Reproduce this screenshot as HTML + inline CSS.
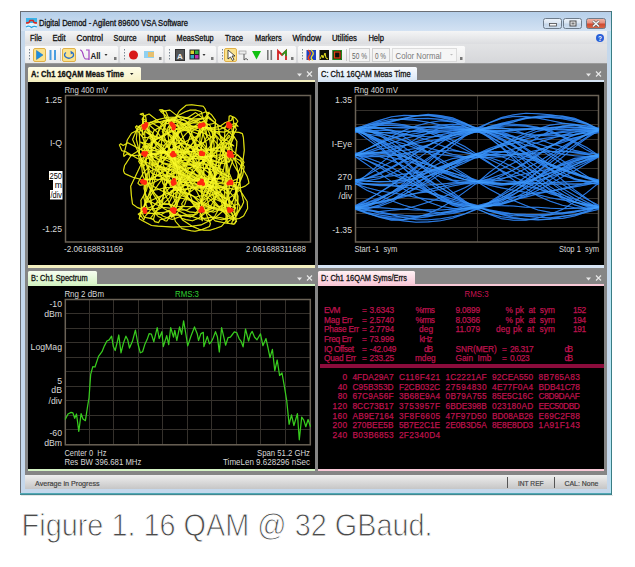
<!DOCTYPE html>
<html><head><meta charset="utf-8"><style>
html,body{margin:0;padding:0;background:#fff;width:635px;height:567px;overflow:hidden}
svg{display:block}
</style></head><body>
<svg width="635" height="567" viewBox="0 0 635 567" shape-rendering="auto">
<defs>
<linearGradient id="gTitle" x1="0" y1="0" x2="0" y2="1"><stop offset="0" stop-color="#b6cfe9"/><stop offset="1" stop-color="#d3e2f3"/></linearGradient>
<linearGradient id="gMenu" x1="0" y1="0" x2="0" y2="1"><stop offset="0" stop-color="#f4f5f6"/><stop offset="1" stop-color="#dcdde0"/></linearGradient>
<linearGradient id="gTool" x1="0" y1="0" x2="0" y2="1"><stop offset="0" stop-color="#e2e3e5"/><stop offset="1" stop-color="#d6d7da"/></linearGradient>
<linearGradient id="gStrip" x1="0" y1="0" x2="0" y2="1"><stop offset="0" stop-color="#fbfbfb"/><stop offset="1" stop-color="#ebebeb"/></linearGradient>
<linearGradient id="gStatus" x1="0" y1="0" x2="0" y2="1"><stop offset="0" stop-color="#eeeeee"/><stop offset="1" stop-color="#c6c6c6"/></linearGradient>
<linearGradient id="gTeal" x1="0" y1="0" x2="0" y2="1"><stop offset="0" stop-color="#58b8c8"/><stop offset="1" stop-color="#3a787e"/></linearGradient>
<linearGradient id="gBtn" x1="0" y1="0" x2="0" y2="1"><stop offset="0" stop-color="#edf3fa"/><stop offset="0.45" stop-color="#dbe6f2"/><stop offset="0.55" stop-color="#c4d6ea"/><stop offset="1" stop-color="#d0e0f0"/></linearGradient>
<linearGradient id="gClose" x1="0" y1="0" x2="0" y2="1"><stop offset="0" stop-color="#f2b8a8"/><stop offset="0.45" stop-color="#e49080"/><stop offset="0.55" stop-color="#d04a30"/><stop offset="1" stop-color="#d86a48"/></linearGradient>
<linearGradient id="gTabA" x1="0" y1="0" x2="0" y2="1"><stop offset="0" stop-color="#fffde8"/><stop offset="1" stop-color="#f6f0c4"/></linearGradient>
<linearGradient id="gTabC" x1="0" y1="0" x2="0" y2="1"><stop offset="0" stop-color="#fafcff"/><stop offset="1" stop-color="#d8e6f6"/></linearGradient>
<linearGradient id="gTabB" x1="0" y1="0" x2="0" y2="1"><stop offset="0" stop-color="#f6fdf0"/><stop offset="1" stop-color="#d2f2c0"/></linearGradient>
<linearGradient id="gTabD" x1="0" y1="0" x2="0" y2="1"><stop offset="0" stop-color="#fff2f5"/><stop offset="1" stop-color="#f8c4d4"/></linearGradient>
<clipPath id="clipEye"><rect x="355" y="96" width="245" height="146"/></clipPath>
</defs>
<rect x="20" y="11" width="592" height="483" fill="#c5d8ec" />
<rect x="20.5" y="11.5" width="591" height="482" fill="none" stroke="#6a6e74" stroke-width="1"/>
<rect x="20" y="493" width="592" height="2" fill="url(#gTeal)" />
<rect x="21" y="495" width="592" height="1" fill="#e4e6e6" />
<rect x="611" y="11" width="1" height="484" fill="#3a7c84" />
<rect x="610" y="31" width="1" height="462" fill="#b4e6f4" />
<rect x="21" y="12" width="590" height="19" fill="url(#gTitle)" />
<rect x="25" y="31" width="582" height="13" fill="url(#gMenu)" />
<rect x="25" y="44" width="582" height="19" fill="url(#gTool)" />
<rect x="25" y="63" width="582" height="412" fill="#858585" />
<rect x="25" y="63" width="582" height="1" fill="#9a9a9a" />
<rect x="25" y="475" width="582" height="14" fill="url(#gStatus)" />
<g transform="translate(26,18)"><rect x="0" y="0" width="11" height="10.5" fill="#dff4fc"/><rect x="0" y="0" width="11" height="5" fill="#38b4ea"/><path d="M0 5 Q2 5 3 4.5 L4 2.5 L7 2.5 L8 4.5 Q9 5 11 5" stroke="#d82820" stroke-width="1.5" fill="none"/><path d="M0 9 Q3 7 5.5 9.5 Q8 7.5 11 9" stroke="#2aa0e0" stroke-width="1.3" fill="none"/></g>
<text xml:space="preserve" x="39.0" y="26.0" font-family="Liberation Sans" font-size="8.7" fill="#111" font-weight="normal" text-anchor="start" textLength="149.0" lengthAdjust="spacingAndGlyphs" stroke="#111" stroke-width="0.3">Digital Demod - Agilent 89600 VSA Software</text>
<rect x="543.5" y="18.5" width="18" height="10" rx="2" fill="url(#gBtn)" stroke="#6d7b8a" stroke-width="1"/>
<rect x="549.5" y="23.5" width="7" height="2.5" fill="#f8f8f8" stroke="#4a4a4a" stroke-width="0.8"/>
<rect x="563.5" y="18.5" width="18" height="10" rx="2" fill="url(#gBtn)" stroke="#6d7b8a" stroke-width="1"/>
<rect x="570" y="21" width="6" height="5" fill="#f0f0f0" stroke="#4a4a4a" stroke-width="1"/><rect x="571.5" y="22.5" width="3" height="2" fill="#777"/>
<rect x="586.5" y="18.5" width="19" height="10" rx="2" fill="url(#gClose)" stroke="#6d7b8a" stroke-width="1"/>
<path d="M593 21 L599 26.5 M599 21 L593 26.5" stroke="#555" stroke-width="2.6"/><path d="M593 21 L599 26.5 M599 21 L593 26.5" stroke="#f6f6f6" stroke-width="1.6"/>
<text xml:space="preserve" x="30.0" y="41.0" font-family="Liberation Sans" font-size="8.7" fill="#111" font-weight="normal" text-anchor="start" textLength="12.0" lengthAdjust="spacingAndGlyphs" stroke="#111" stroke-width="0.3">File</text>
<text xml:space="preserve" x="52.4" y="41.0" font-family="Liberation Sans" font-size="8.7" fill="#111" font-weight="normal" text-anchor="start" textLength="13.2" lengthAdjust="spacingAndGlyphs" stroke="#111" stroke-width="0.3">Edit</text>
<text xml:space="preserve" x="76.6" y="41.0" font-family="Liberation Sans" font-size="8.7" fill="#111" font-weight="normal" text-anchor="start" textLength="26.4" lengthAdjust="spacingAndGlyphs" stroke="#111" stroke-width="0.3">Control</text>
<text xml:space="preserve" x="113.6" y="41.0" font-family="Liberation Sans" font-size="8.7" fill="#111" font-weight="normal" text-anchor="start" textLength="23.0" lengthAdjust="spacingAndGlyphs" stroke="#111" stroke-width="0.3">Source</text>
<text xml:space="preserve" x="147.0" y="41.0" font-family="Liberation Sans" font-size="8.7" fill="#111" font-weight="normal" text-anchor="start" textLength="18.6" lengthAdjust="spacingAndGlyphs" stroke="#111" stroke-width="0.3">Input</text>
<text xml:space="preserve" x="176.6" y="41.0" font-family="Liberation Sans" font-size="8.7" fill="#111" font-weight="normal" text-anchor="start" textLength="37.0" lengthAdjust="spacingAndGlyphs" stroke="#111" stroke-width="0.3">MeasSetup</text>
<text xml:space="preserve" x="225.0" y="41.0" font-family="Liberation Sans" font-size="8.7" fill="#111" font-weight="normal" text-anchor="start" textLength="18.0" lengthAdjust="spacingAndGlyphs" stroke="#111" stroke-width="0.3">Trace</text>
<text xml:space="preserve" x="255.0" y="41.0" font-family="Liberation Sans" font-size="8.7" fill="#111" font-weight="normal" text-anchor="start" textLength="26.6" lengthAdjust="spacingAndGlyphs" stroke="#111" stroke-width="0.3">Markers</text>
<text xml:space="preserve" x="292.4" y="41.0" font-family="Liberation Sans" font-size="8.7" fill="#111" font-weight="normal" text-anchor="start" textLength="28.6" lengthAdjust="spacingAndGlyphs" stroke="#111" stroke-width="0.3">Window</text>
<text xml:space="preserve" x="332.0" y="41.0" font-family="Liberation Sans" font-size="8.7" fill="#111" font-weight="normal" text-anchor="start" textLength="25.0" lengthAdjust="spacingAndGlyphs" stroke="#111" stroke-width="0.3">Utilities</text>
<text xml:space="preserve" x="368.4" y="41.0" font-family="Liberation Sans" font-size="8.7" fill="#111" font-weight="normal" text-anchor="start" textLength="15.6" lengthAdjust="spacingAndGlyphs" stroke="#111" stroke-width="0.3">Help</text>
<circle cx="600" cy="38" r="4" fill="#2a5fd8"/><text x="600" y="40.5" font-family="Liberation Sans" font-size="6.5" font-weight="bold" fill="#fff" text-anchor="middle">?</text>
<rect x="25" y="46" width="93" height="17" rx="1.5" fill="url(#gStrip)"/>
<rect x="29" y="49" width="1" height="1.5" fill="#7a8794" />
<rect x="29" y="52" width="1" height="1.5" fill="#7a8794" />
<rect x="29" y="55" width="1" height="1.5" fill="#7a8794" />
<rect x="29" y="58" width="1" height="1.5" fill="#7a8794" />
<rect x="120" y="46" width="43" height="17" rx="1.5" fill="url(#gStrip)"/>
<rect x="124" y="49" width="1" height="1.5" fill="#7a8794" />
<rect x="124" y="52" width="1" height="1.5" fill="#7a8794" />
<rect x="124" y="55" width="1" height="1.5" fill="#7a8794" />
<rect x="124" y="58" width="1" height="1.5" fill="#7a8794" />
<rect x="165" y="46" width="51" height="17" rx="1.5" fill="url(#gStrip)"/>
<rect x="169" y="49" width="1" height="1.5" fill="#7a8794" />
<rect x="169" y="52" width="1" height="1.5" fill="#7a8794" />
<rect x="169" y="55" width="1" height="1.5" fill="#7a8794" />
<rect x="169" y="58" width="1" height="1.5" fill="#7a8794" />
<rect x="218" y="46" width="78" height="17" rx="1.5" fill="url(#gStrip)"/>
<rect x="222" y="49" width="1" height="1.5" fill="#7a8794" />
<rect x="222" y="52" width="1" height="1.5" fill="#7a8794" />
<rect x="222" y="55" width="1" height="1.5" fill="#7a8794" />
<rect x="222" y="58" width="1" height="1.5" fill="#7a8794" />
<rect x="298" y="46" width="167" height="17" rx="1.5" fill="url(#gStrip)"/>
<rect x="302" y="49" width="1" height="1.5" fill="#7a8794" />
<rect x="302" y="52" width="1" height="1.5" fill="#7a8794" />
<rect x="302" y="55" width="1" height="1.5" fill="#7a8794" />
<rect x="302" y="58" width="1" height="1.5" fill="#7a8794" />
<rect x="33.5" y="48.5" width="12" height="13" rx="1.5" fill="#fbe38e" stroke="#e0b048" stroke-width="1"/>
<rect x="62.5" y="48.5" width="13" height="13" rx="1.5" fill="#fbe38e" stroke="#e0b048" stroke-width="1"/>
<rect x="224.5" y="48.5" width="12" height="13" rx="1.5" fill="#fbe38e" stroke="#e0b048" stroke-width="1"/>
<path d="M36.5 50.5 L43 55 L36.5 59.5 Z" fill="#1c8ee0" stroke="#1a6fb8" stroke-width="0.5"/>
<rect x="49.5" y="50" width="2" height="10" fill="#4a9ee0"/><rect x="54" y="50" width="2" height="10" fill="#4a9ee0"/>
<rect x="60" y="48" width="1" height="13" fill="#c8c8c8" />
<path d="M66 52.5 A4.5 3.2 0 1 0 72.5 52.8" fill="none" stroke="#2a70c8" stroke-width="1.4"/><path d="M70.5 50.8 L73.5 52.5 L70.8 54.5 Z" fill="#2a70c8"/>
<path d="M80 50 Q82 50 83 54 Q84 59 86 59 L89 59 M86 50 L89 50 L89 60" stroke="#a040c0" stroke-width="1.2" fill="none"/>
<text xml:space="preserve" x="90.4" y="58.5" font-family="Liberation Sans" font-size="8.5" fill="#222" font-weight="bold" text-anchor="start" textLength="10.2" lengthAdjust="spacingAndGlyphs" >All</text>
<path d="M104.5 54 L107.5 54 L106 56 Z" fill="#333"/>
<rect x="114" y="57" width="2.5" height="3" fill="#777" />
<circle cx="133.5" cy="55" r="4.5" fill="#d81818"/>
<rect x="144" y="51" width="10" height="7" fill="#8fd0f0"/><rect x="148" y="52" width="6" height="5" fill="#e6c070"/>
<rect x="159" y="57" width="2.5" height="3" fill="#777" />
<rect x="175.5" y="49.5" width="9" height="11" fill="#555" stroke="#333"/><text x="180" y="58.5" font-family="Liberation Sans" font-size="8" font-weight="bold" fill="#eee" text-anchor="middle">A</text>
<rect x="189.5" y="49.5" width="10" height="10" fill="#222"/><rect x="190.5" y="50.5" width="3.5" height="3.5" fill="#d8d030"/><rect x="195" y="50.5" width="3.5" height="3.5" fill="#30b040"/><rect x="190.5" y="55" width="3.5" height="3.5" fill="#30a8c0"/><rect x="195" y="55" width="3.5" height="3.5" fill="#c030b0"/>
<path d="M202.5 54 L205.5 54 L204 56 Z" fill="#333"/>
<rect x="211" y="57" width="2.5" height="3" fill="#777" />
<path d="M228 50 L228 59 L230.5 57 L232.5 60.5 L234 59.5 L232 56 L235 56 Z" fill="#fff" stroke="#222" stroke-width="0.8"/>
<rect x="239" y="51" width="7" height="3" fill="#eee" stroke="#888" stroke-width="0.6"/><path d="M244 54 L244 60 L246 58.5 L248 60" stroke="#444" stroke-width="0.9" fill="none"/>
<path d="M252 51 L261 51 L256.5 59.5 Z" fill="#10c010"/>
<rect x="267" y="50" width="1.6" height="10" fill="#777" />
<rect x="270.5" y="50" width="1.6" height="10" fill="#777" />
<path d="M278 60 L278 51 L282 55 L286 51 L286 60" stroke="#d02020" stroke-width="1.8" fill="none"/><path d="M282 55 L286 51 L286 56" stroke="#20a020" stroke-width="1.6" fill="none"/>
<rect x="291" y="57" width="2.5" height="3" fill="#777" />
<rect x="306.5" y="50" width="9.5" height="10" fill="#2040c0"/><path d="M308 50 Q312 53 309 56 Q307 59 310 60" stroke="#f04010" stroke-width="1.5" fill="none"/><path d="M311 50 Q315 53 312 56 Q310 59 313 60" stroke="#f0e020" stroke-width="1.3" fill="none"/>
<rect x="319.5" y="50" width="9.5" height="10" fill="#101008"/><path d="M320 59 L322 55 L323 58 L325 53 L326 58 L328 59" stroke="#e8e020" stroke-width="1" fill="none"/>
<rect x="332.5" y="50" width="9.5" height="10" fill="#101008"/><rect x="334.5" y="52" width="5.5" height="6" fill="none" stroke="#e04010" stroke-width="1.2"/><rect x="333" y="50.5" width="8.5" height="9" fill="none" stroke="#20a020" stroke-width="0.8"/>
<rect x="346" y="49" width="1" height="12" fill="#c8c8c8" />
<rect x="349.5" y="48.5" width="20" height="13" fill="#f4f4f4" stroke="#d0d0d0"/>
<text xml:space="preserve" x="352.0" y="58.5" font-family="Liberation Sans" font-size="8.7" fill="#666" font-weight="normal" text-anchor="start" textLength="15.0" lengthAdjust="spacingAndGlyphs" >50 %</text>
<rect x="372.5" y="48.5" width="17" height="13" fill="#f4f4f4" stroke="#d0d0d0"/>
<text xml:space="preserve" x="375.0" y="58.5" font-family="Liberation Sans" font-size="8.7" fill="#666" font-weight="normal" text-anchor="start" textLength="11.0" lengthAdjust="spacingAndGlyphs" >0 %</text>
<rect x="392.5" y="48.5" width="64" height="13" fill="#f6f6f6" stroke="#dcdcdc"/>
<text xml:space="preserve" x="395.5" y="58.5" font-family="Liberation Sans" font-size="8.7" fill="#7a7a7a" font-weight="normal" text-anchor="start" textLength="46.0" lengthAdjust="spacingAndGlyphs" >Color Normal</text>
<path d="M450 54 L453 54 L451.5 55.5 Z" fill="#bbb"/>
<rect x="460" y="57" width="2.5" height="3" fill="#777" />
<rect x="28" y="67" width="113" height="15" rx="1.5" fill="url(#gTabA)"/>
<rect x="28" y="80" width="287" height="2" fill="#f3efc0" />
<rect x="28" y="82" width="287" height="183" fill="#000" />
<rect x="28" y="265" width="287" height="3" fill="#f3efc0" />
<text xml:space="preserve" x="31.0" y="77.0" font-family="Liberation Sans" font-size="8.7" fill="#111" font-weight="bold" text-anchor="start" textLength="93.0" lengthAdjust="spacingAndGlyphs" stroke="#111" stroke-width="0.3">A: Ch1 16QAM Meas Time</text>
<path d="131 73" />
<path d="M130 73 L133.5 73 L131.7 75 Z" fill="#222"/>
<path d="M297 73.5 L302 73.5 L299.5 76.5 Z" fill="#e8e8e8"/>
<path d="M307 71.5 L312 76.5 M312 71.5 L307 76.5" stroke="#e8e8e8" stroke-width="1.2"/>
<rect x="318" y="67" width="99" height="15" rx="1.5" fill="url(#gTabC)"/>
<rect x="318" y="80" width="286" height="2" fill="#d6e4f4" />
<rect x="318" y="82" width="286" height="183" fill="#000" />
<rect x="318" y="265" width="286" height="3" fill="#d6e4f4" />
<text xml:space="preserve" x="321.0" y="77.0" font-family="Liberation Sans" font-size="8.7" fill="#111" font-weight="normal" text-anchor="start" textLength="89.6" lengthAdjust="spacingAndGlyphs" stroke="#111" stroke-width="0.3">C: Ch1 16QAM Meas Time</text>
<path d="M586 73.5 L591 73.5 L588.5 76.5 Z" fill="#e8e8e8"/>
<path d="M596 71.5 L601 76.5 M601 71.5 L596 76.5" stroke="#e8e8e8" stroke-width="1.2"/>
<rect x="28" y="271" width="69" height="15" rx="1.5" fill="url(#gTabB)"/>
<rect x="28" y="284" width="287" height="2" fill="#d4f2c4" />
<rect x="28" y="286" width="287" height="183" fill="#000" />
<rect x="28" y="469" width="287" height="2" fill="#d4f2c4" />
<text xml:space="preserve" x="31.0" y="281.0" font-family="Liberation Sans" font-size="8.7" fill="#111" font-weight="normal" text-anchor="start" textLength="56.6" lengthAdjust="spacingAndGlyphs" stroke="#111" stroke-width="0.3">B: Ch1 Spectrum</text>
<path d="M297 277.5 L302 277.5 L299.5 280.5 Z" fill="#e8e8e8"/>
<path d="M307 275.5 L312 280.5 M312 275.5 L307 280.5" stroke="#e8e8e8" stroke-width="1.2"/>
<rect x="318" y="271" width="97" height="15" rx="1.5" fill="url(#gTabD)"/>
<rect x="318" y="284" width="286" height="2" fill="#f8c8d6" />
<rect x="318" y="286" width="286" height="183" fill="#000" />
<rect x="318" y="469" width="286" height="2" fill="#f8c8d6" />
<text xml:space="preserve" x="321.0" y="281.0" font-family="Liberation Sans" font-size="8.7" fill="#111" font-weight="normal" text-anchor="start" textLength="86.0" lengthAdjust="spacingAndGlyphs" stroke="#111" stroke-width="0.3">D: Ch1 16QAM Syms/Errs</text>
<path d="M586 277.5 L591 277.5 L588.5 280.5 Z" fill="#e8e8e8"/>
<path d="M596 275.5 L601 280.5 M601 275.5 L596 280.5" stroke="#e8e8e8" stroke-width="1.2"/>
<rect x="65.5" y="95.5" width="245" height="146.5" fill="none" stroke="#6a6256" stroke-width="1.5"/>
<text xml:space="preserve" x="64.4" y="93.0" font-family="Liberation Sans" font-size="8.7" fill="#d8d8d8" font-weight="normal" text-anchor="start" textLength="43.6" lengthAdjust="spacingAndGlyphs" >Rng 400 mV</text>
<text xml:space="preserve" x="62.0" y="103.0" font-family="Liberation Sans" font-size="8.7" fill="#d8d8d8" font-weight="normal" text-anchor="end" >1.25</text>
<text xml:space="preserve" x="62.0" y="146.0" font-family="Liberation Sans" font-size="8.7" fill="#d8d8d8" font-weight="normal" text-anchor="end" >I-Q</text>
<rect x="49" y="171" width="13.5" height="9" fill="#fff" />
<rect x="53" y="180" width="9.5" height="10" fill="#fff" />
<rect x="50" y="190" width="12.5" height="9.5" fill="#fff" />
<text xml:space="preserve" x="62.0" y="178.5" font-family="Liberation Sans" font-size="8.7" fill="#000" font-weight="normal" text-anchor="end" textLength="12.5" lengthAdjust="spacingAndGlyphs" >250</text>
<text xml:space="preserve" x="62.0" y="188.0" font-family="Liberation Sans" font-size="8.7" fill="#000" font-weight="normal" text-anchor="end" >m</text>
<text xml:space="preserve" x="62.0" y="197.5" font-family="Liberation Sans" font-size="8.7" fill="#000" font-weight="normal" text-anchor="end" textLength="11.5" lengthAdjust="spacingAndGlyphs" >/div</text>
<text xml:space="preserve" x="62.0" y="232.0" font-family="Liberation Sans" font-size="8.7" fill="#d8d8d8" font-weight="normal" text-anchor="end" >-1.25</text>
<text xml:space="preserve" x="64.0" y="252.0" font-family="Liberation Sans" font-size="8.7" fill="#d8d8d8" font-weight="normal" text-anchor="start" textLength="59.0" lengthAdjust="spacingAndGlyphs" >-2.06168831169</text>
<text xml:space="preserve" x="306.0" y="252.0" font-family="Liberation Sans" font-size="8.7" fill="#d8d8d8" font-weight="normal" text-anchor="end" textLength="60.0" lengthAdjust="spacingAndGlyphs" >2.061688311688</text>
<g fill="none" stroke-linejoin="round"><polyline points="171.3,182.0 169.8,185.1 175.7,187.4 180.1,190.1 185.0,189.7 192.7,188.2 198.8,185.9 205.7,183.3 214.3,180.3 214.2,169.7 211.4,161.6 210.4,158.7 210.8,148.6 209.9,140.4 205.5,133.9 204.7,130.4 199.7,124.3 201.1,125.3 199.7,125.7 199.3,123.2 200.4,132.7 199.8,140.2 200.5,145.0 194.5,148.3 193.6,153.7 192.7,157.8 193.3,161.9 193.4,167.3 194.1,166.1 193.3,166.4 196.7,171.3 201.4,175.8 201.4,178.4 204.8,181.3 210.5,185.5 213.9,189.9 214.6,194.1 222.6,201.8 226.7,205.5 230.3,207.7 232.7,209.9 230.1,213.1 227.8,211.3 222.1,209.5 214.4,208.1 201.4,201.2 189.4,193.7 177.0,190.2 169.3,183.6 161.8,177.4 151.7,173.2 148.0,167.0 144.5,160.2 146.8,159.0 145.5,159.6 147.3,154.0 151.8,154.8 158.8,151.8 167.1,151.9 170.9,150.5 178.9,152.0 184.4,152.7 195.2,151.1 204.3,155.0 207.4,159.9 211.2,164.9 213.7,171.3 216.1,181.7 217.2,191.3 216.0,196.5 211.7,204.7 206.2,212.4 199.0,218.0 192.5,220.8 185.9,219.6 181.4,218.2 180.4,215.1 175.0,215.0 171.7,217.3 172.6,215.0 177.6,213.2 182.5,219.9 191.8,226.1 199.2,229.3 204.0,230.3 210.0,230.2 216.2,228.2 221.7,226.2 226.0,221.1 226.2,208.4 220.0,190.3 211.7,173.2 199.8,156.0 192.2,139.6 187.7,127.7 177.2,121.0 172.4,119.2 166.4,121.2 162.3,131.5 167.4,144.7 174.3,159.1 180.2,178.6 184.6,192.3 191.5,202.0 197.7,210.2 206.6,212.9 213.8,210.2 214.1,202.8 216.1,195.4 215.3,179.4 213.2,166.1 210.3,154.8 201.3,144.6 192.7,135.7 185.5,129.5 182.0,126.5 177.0,120.2 168.5,118.7 166.8,120.8 165.4,123.0 170.1,124.0 176.4,125.9 185.5,123.4 192.5,126.6 199.4,126.9 211.9,128.9 220.0,129.3 227.4,126.1 232.5,124.3 235.3,123.3 238.0,126.3 235.5,124.1 236.1,124.2 235.8,127.0 230.4,125.7 230.5,128.0 227.9,130.8 224.1,132.1 215.1,131.2 215.0,134.2 204.5,142.2 198.2,144.6 190.1,147.6 179.2,151.9 170.3,153.8 165.3,158.1 161.7,162.2 152.1,160.0 152.6,156.5 147.1,154.2 147.4,154.8 146.2,152.7 147.7,155.8 148.4,156.6 150.1,161.7 156.5,168.6 161.9,177.3 172.6,184.4 181.1,192.7 192.5,202.6 204.7,210.3 215.1,220.9 225.2,223.0 230.6,223.7 233.7,224.1 234.6,224.0 236.3,221.3 235.9,217.6 233.7,211.7 221.3,197.1 210.9,182.9 197.9,169.3 188.4,152.6 178.5,140.8 167.0,132.4 158.3,126.7 150.3,122.1 149.8,123.6 146.8,128.4 152.5,132.8 157.0,144.1 165.3,152.3 176.5,165.1 190.5,174.0 204.3,182.7 212.0,190.0 222.5,195.9 224.2,198.4 226.0,197.9 224.9,198.3 222.6,194.4 213.6,187.8 202.8,185.4 193.8,179.3 182.4,176.0 174.5,167.6 163.2,163.4 155.4,157.7 148.0,154.3 143.6,155.4 141.5,148.9 142.6,150.9 148.4,146.7 152.9,150.5 163.3,151.4 171.4,157.4 181.3,163.9 190.9,168.9 199.8,179.7 201.0,183.5 201.8,197.2 201.8,208.7 196.6,214.0 190.4,216.9 183.5,215.7 173.8,214.4 162.6,207.7 157.6,201.1 149.3,187.4 145.9,175.5 141.9,164.0 139.2,150.8 136.3,139.2 137.2,130.1 138.4,127.5 142.1,124.2 145.6,125.7 145.2,127.2 150.2,134.3 155.4,143.5 161.6,146.6 166.1,153.5 170.1,152.5 175.6,150.2 185.4,151.4 191.8,151.7 196.6,148.7 200.9,141.3 202.8,143.6 205.5,146.5 206.6,152.7 202.1,162.3 189.4,168.2 184.1,174.4 175.1,185.5 169.4,197.9 159.4,207.7 151.5,209.2 144.6,209.6 142.2,209.2 145.3,203.9 143.7,196.6 147.4,181.2 148.3,168.4 152.1,150.4 160.7,139.3 172.4,129.4 181.6,119.9 188.7,117.1 195.6,112.6 203.0,118.3 205.4,122.2 207.5,125.2 206.0,128.9 202.4,130.5 198.7,134.2 190.8,131.1 185.4,130.6 174.4,124.8 167.8,119.3 162.6,123.2 156.1,121.5 148.5,122.7 139.3,125.9 136.5,130.3 132.6,139.5 137.5,150.4 142.6,161.2 148.8,166.5 155.2,170.1 165.7,175.7 180.1,178.8 192.8,180.9 208.5,178.9 214.6,179.2 220.2,178.1 224.1,176.8 227.2,182.1 225.9,187.0 221.9,189.4 216.8,196.2 207.5,202.3 203.0,206.7 197.7,209.5 199.4,211.2 198.4,208.8 199.7,202.3 204.3,198.1 209.9,188.6 217.1,180.4 223.4,169.9 225.8,158.5 226.5,152.8 225.8,153.1 223.6,157.7 218.4,160.4 212.8,170.4 202.5,183.0 188.6,193.0 184.7,204.6 175.2,214.9 169.3,216.2 171.2,213.4 175.9,206.6 180.3,197.2 193.4,180.1 207.2,166.3 213.2,155.6 223.4,142.2 230.1,136.6 228.8,135.1 224.1,142.0 217.6,146.3 205.6,157.2 195.9,169.4 180.6,182.9 166.1,196.7 153.1,206.1 143.7,209.9 137.1,207.4 132.5,204.0 131.4,195.8 130.7,186.2 138.9,169.0 145.9,154.0 155.0,137.9 161.2,127.0 166.4,121.8 175.3,117.9 177.8,119.3 186.0,120.7 190.6,129.1 193.3,138.5 196.2,146.5 202.6,155.2 209.0,160.7 212.8,166.3 222.4,169.5 224.3,173.2 227.7,176.8 231.9,180.1 234.4,184.1 233.1,187.4 229.1,194.3 226.6,199.9 219.2,208.2 214.9,216.0 210.7,220.9 204.7,219.9 202.6,217.3 200.0,216.1 201.2,207.6 201.9,198.8 207.2,185.9 210.1,168.8 211.8,153.0 211.5,141.5 209.4,133.1 206.3,127.1 200.2,125.9 190.4,127.4 180.6,130.3 171.8,139.4 162.9,151.6 158.0,163.7 153.4,175.5 151.5,187.5 150.0,194.6 151.1,201.2 152.6,209.8 158.0,216.5 160.5,217.5 165.0,220.8 166.9,221.0 170.6,215.3 172.7,208.8 175.8,203.8 173.7,197.5 173.0,190.4 173.9,186.7 173.8,181.6 174.1,181.2 177.9,184.6 182.2,191.4 189.1,198.7 198.5,204.4 202.4,209.6 211.7,216.8 219.9,217.5 225.3,218.9 227.1,216.3 226.8,212.5 223.9,203.2 216.2,194.2 207.0,183.2 194.8,165.5 184.0,153.0 178.2,138.1 170.5,127.0 165.8,115.5 160.6,111.6 164.8,110.9 169.9,110.1 179.2,117.4 186.9,122.1 191.9,126.5 201.6,127.1 212.6,127.9 220.2,126.2 224.9,122.8 231.6,120.3 232.5,116.7 230.6,115.7 229.2,116.0 228.9,120.6 225.1,127.7 224.2,141.4 220.1,154.0 218.1,168.3 209.1,186.0 206.9,196.4 209.1,207.3 201.4,214.9 202.3,220.8 201.3,217.4 201.8,215.1 197.8,209.6 199.6,202.7 203.3,197.0 202.3,189.0 208.7,179.3 209.1,175.8 208.9,172.0 209.8,168.8 209.8,170.4 209.3,169.9 210.8,173.9 212.7,179.6 212.2,186.3 208.8,189.4 207.4,194.0 201.8,196.2 199.3,195.7 196.0,197.3 189.9,194.6 182.0,192.6 174.4,185.6 169.5,178.5 164.6,168.2 161.8,161.4 160.4,151.8 162.0,139.2 163.9,131.0 165.9,123.7 171.1,123.0 179.0,121.8 187.9,127.5 200.4,131.6 211.3,136.7 219.0,146.3 223.2,153.5 230.2,158.0 230.1,160.9 227.6,162.9 221.3,163.6 212.4,159.7 199.4,156.3 189.3,146.5 180.9,139.1 172.0,130.5 170.1,122.6 164.7,117.5 163.0,110.5 159.3,110.0 160.9,109.7 162.4,109.8 166.1,112.0 168.7,118.5 170.3,124.1 167.2,128.7 168.6,139.2 169.5,147.9 171.5,152.2 173.9,159.6 172.1,161.3 168.6,159.0 162.6,157.4 167.1,157.2 167.9,150.7 172.3,140.3 178.0,134.9 181.6,128.0 187.5,123.2 195.7,122.8 207.2,124.7 212.3,123.7 215.6,122.8 213.8,135.5 211.1,147.2 209.8,157.0 205.3,167.6 201.7,176.5 193.6,182.7 188.8,193.4 181.7,203.8 182.4,206.1 175.6,210.7 168.9,210.3 161.1,214.5 153.9,213.6 147.3,213.3 143.2,211.7 143.7,212.0 141.3,208.4 141.0,201.2 140.9,200.3 146.4,190.7 147.7,185.7 150.2,181.1 152.9,173.8 152.6,164.2 151.2,155.4 151.9,145.1 150.4,135.6 148.0,132.5 148.0,129.8 146.3,125.5 145.5,120.0 143.2,119.3 142.6,119.8 142.7,126.6 142.8,130.1 140.1,130.2 140.7,130.7 142.8,131.8 143.6,135.0 142.7,133.7 142.1,130.8 138.0,126.7 139.0,126.6 140.1,127.4 136.7,126.7 136.9,125.6 135.4,127.0 138.6,132.1 142.7,137.3 149.1,137.8 153.7,141.1 159.8,144.0 168.4,147.2 176.1,153.9 182.7,157.6 191.4,156.7 197.8,156.4 201.5,156.9 210.1,157.3 215.4,151.3 221.8,150.7 223.3,148.7 227.5,143.8 229.3,143.0 232.2,144.4 233.8,146.0 225.8,142.5 221.4,147.3 212.8,149.5 206.1,148.8 194.9,151.4 184.4,152.1 173.1,152.0 162.9,151.8 156.1,154.6 150.8,153.2 148.4,154.5 150.7,156.1 155.3,161.7 159.3,166.2 166.1,170.6 175.6,178.8 185.6,183.1 196.0,189.4 203.3,191.7 208.3,192.2 211.5,189.3 210.5,184.8 205.5,182.8 199.1,172.3 192.1,164.6 184.6,159.6 182.2,153.8 175.5,148.8 172.9,146.9 176.2,148.8 178.9,146.1 181.2,150.9 182.2,155.4 185.8,156.8 180.4,154.0 180.2,157.5 174.3,155.2 166.1,151.5 158.9,150.0 151.9,147.7 148.3,143.8 140.8,142.2 144.4,144.8 145.5,148.6 153.4,154.2 161.9,162.5 174.9,165.5 187.1,170.6 200.2,176.3 215.5,181.2 224.9,183.3 232.0,181.1 237.7,178.7 241.3,172.9 241.6,167.8 244.0,162.2 242.0,159.0 237.7,154.9 236.0,155.8 235.7,157.3 234.7,159.9 236.5,164.6 238.7,175.4 235.7,184.9 236.9,194.3 237.5,204.1 233.3,206.1 235.1,208.0 233.6,207.6 225.0,203.5 213.8,198.5 211.7,190.9 205.9,179.6 200.2,167.4 198.7,159.7 194.7,153.9 193.9,149.2 203.4,151.0 213.3,150.3 219.8,151.3 224.4,151.5 228.0,156.6 229.4,161.9 225.3,160.6 220.3,162.9 208.8,160.2 197.5,158.9 182.3,157.6 168.8,159.0 157.8,154.4 149.2,154.2 148.1,157.4 150.5,159.5 153.7,163.9 164.8,167.8 176.3,173.2 194.2,177.6 209.0,182.3 226.1,184.3 239.8,188.3 245.1,186.1 248.9,183.2 248.5,180.7 247.1,176.2 243.1,169.2 240.4,165.1 236.2,160.6 229.9,154.6 223.9,151.2 221.3,148.7 221.0,149.8 223.1,151.9 225.2,158.8 227.5,165.4 228.8,172.2 233.0,182.0 238.0,196.1 237.8,206.2 236.8,212.7 235.4,216.6 233.7,219.2 233.7,220.7 233.6,217.9 230.3,210.2 227.7,197.1 230.0,182.7 226.9,169.1 223.9,153.3 221.1,140.2 217.6,124.9 214.6,122.1 212.3,120.2 208.2,116.5 201.4,124.2 199.4,129.7 195.7,142.6 191.1,154.2 185.9,167.3 182.5,175.1 179.6,181.4 178.7,190.1 180.4,191.4 181.5,190.2 179.6,185.7 181.0,178.9 180.4,171.5 178.1,161.5 178.2,156.0 176.2,147.0 173.2,138.8 167.8,134.3 169.9,130.1 168.5,126.4 169.0,127.4 170.8,126.5 172.6,128.6 174.1,133.4 177.2,134.0 181.1,140.6 182.4,141.7 181.0,143.6 180.2,144.1 178.1,150.5 171.0,152.7 167.1,153.2 156.5,164.0 149.1,166.6 143.2,173.0 139.9,179.2 137.9,183.3 140.1,185.2 146.3,184.1 153.0,183.0 164.0,176.8 175.8,172.9 185.2,169.4 196.7,165.2 202.8,165.0 205.0,161.8 206.5,160.7 199.8,162.6 192.7,164.2 180.7,166.3 173.0,169.7 161.2,169.6 154.7,169.0 146.9,173.4 144.9,180.7 152.3,185.8 161.1,190.5 174.4,196.7 186.2,199.3 200.2,203.8 213.7,208.8 226.9,212.2 232.6,209.6 235.2,209.1 235.8,207.9 230.8,201.3 222.9,197.2 216.9,195.0 207.6,189.3 205.6,185.5 203.1,181.3 199.7,181.3 196.3,180.3 200.5,183.6 205.2,191.8 212.4,194.8 221.0,200.9 222.7,206.7 229.4,215.4 234.1,217.6 236.2,220.1 235.1,222.8 236.6,221.4 233.5,224.2 231.6,223.7 233.4,217.8 231.8,213.1 225.2,203.0 224.4,190.6 226.0,177.6 226.2,162.7 228.5,149.2 233.9,137.1 232.3,131.4 231.5,126.0 234.5,126.5 236.4,129.3 233.1,135.7 230.4,146.3 227.2,155.4 218.6,166.8 215.0,176.7 210.2,184.8 204.9,187.2 195.2,188.7 191.1,187.4 185.0,182.5 181.2,175.9 177.6,170.7 175.0,160.0 174.0,150.9 172.6,142.5 174.3,134.8 175.7,129.1 177.3,129.4 174.2,127.2 172.5,121.4 172.9,125.3 169.7,128.9 164.7,133.4 163.8,135.8 156.5,139.5 149.2,136.2 146.9,140.0 143.8,145.3 142.7,146.6 147.1,146.9 155.7,147.7 156.1,151.1 166.7,153.1 182.3,162.9 195.9,166.8 210.7,169.1 221.6,175.3 232.3,181.9 241.7,192.8 247.2,201.5 247.5,205.7 247.6,208.4 245.6,212.3 243.6,216.0 239.3,218.5 232.5,219.5 224.1,212.5 210.0,199.2 194.3,187.1 179.4,168.8 167.6,156.1 155.9,145.3 147.7,130.0 143.3,122.5 142.1,119.1 144.2,115.9 149.1,114.0 156.3,119.6 162.8,124.9 167.3,131.8 172.4,140.4 175.9,147.0 175.1,154.4 173.8,165.1 174.0,174.4 172.2,179.6 171.9,182.3 173.0,181.8 175.6,183.6 180.8,184.0 182.0,184.6 190.5,186.0 200.1,185.7 205.9,184.5 214.7,186.1 225.4,188.3 230.1,188.4 233.1,189.4 240.3,187.3 239.9,182.5 234.5,182.5 230.4,181.7 218.9,178.1 206.2,179.3 200.8,179.2 193.9,179.0 187.5,183.9 183.1,186.4 179.6,187.9 175.7,193.3 176.3,201.3 177.5,204.2 175.5,209.6 175.1,211.5 170.9,215.5 165.3,218.7 160.0,219.7 158.6,222.6 154.7,221.6 153.5,219.4 149.1,218.1 144.1,217.2 140.9,210.6 141.5,207.1 147.1,207.5 145.4,202.3 150.9,201.7 155.9,204.4 162.8,207.3 174.4,208.7 186.7,214.7 200.2,219.1 211.1,217.4 222.0,219.8 230.7,218.1 233.1,215.9 239.0,210.3 240.0,206.5 237.4,201.6 229.6,191.9 219.2,185.8 211.2,174.7 199.0,165.2 194.4,157.5 186.8,153.6 178.4,152.4 176.1,150.6 175.0,156.5 176.4,165.6 178.9,175.2 181.2,184.6 180.1,193.5 178.3,201.0 174.4,205.6 167.5,203.9 161.6,203.2 153.4,191.6 146.8,183.8 142.8,175.9 141.3,163.8 138.4,155.9 145.7,150.7 154.1,150.5 160.0,152.8 172.4,155.4 184.1,162.4 196.4,166.3 207.1,176.7 217.3,178.7 222.4,179.1 222.3,181.8 224.4,174.5 222.0,175.0 219.4,166.2 211.9,163.7 206.1,156.6 200.9,151.3 197.1,150.1 197.0,146.7 198.7,150.7 203.9,151.7 206.2,156.5 213.1,155.3 217.6,157.0 220.0,157.7 221.7,155.1 224.3,151.3 226.3,143.6 221.9,138.5 218.7,132.5 212.6,129.7 203.9,125.6 203.1,124.8 203.0,128.1 202.8,134.4 201.1,142.3 201.5,151.1 203.2,160.7 209.5,171.1 213.9,183.3 213.5,185.9 209.9,188.7 202.4,187.8 195.6,183.6 191.3,178.4 183.0,172.5 175.1,164.9 169.7,156.3 168.6,157.3 169.5,155.6 177.1,153.5 187.7,160.8 193.2,162.0 208.2,164.9 217.8,171.0 224.3,174.2 227.6,175.7 229.6,176.7 225.3,175.1 213.3,166.8 204.8,160.1 189.8,153.7 173.4,144.9 162.0,137.9 151.2,135.8 144.5,131.2 144.7,133.8 145.2,143.3 150.0,153.6 157.3,165.2 167.8,179.2 179.6,194.4 193.4,201.3 205.2,210.3 213.8,212.1 226.5,206.4 233.1,200.7 235.5,191.8 240.5,180.4 241.7,166.1 240.9,158.2 232.0,150.1 225.6,146.4 213.3,148.4 202.1,151.6 193.4,157.1 183.6,165.2 176.1,171.2 165.9,178.0 167.4,181.4 164.4,185.4 168.4,181.8 173.3,180.9 174.3,180.3 175.8,178.9 174.9,179.1 179.2,179.2 178.0,182.0 178.0,188.3 176.3,198.3 171.3,205.5 171.6,210.7 169.6,213.0 171.4,217.3 173.0,214.7 172.3,208.8 177.6,199.7 181.9,187.8 190.4,175.3 200.4,164.3 212.7,151.9 224.0,138.3 229.1,131.7 239.1,132.4 242.4,133.6 243.4,137.6 244.3,150.2 242.9,161.3 238.7,171.4 235.7,188.5 235.2,201.8 234.5,207.6 234.9,214.2 236.3,216.3 238.0,212.6 241.6,206.7 243.7,201.9 240.3,188.4 239.3,174.4 233.2,164.0 226.4,147.9 217.2,136.8 205.8,125.1 192.6,120.2 178.6,116.3 167.6,119.8 154.0,123.2 143.6,127.0 131.5,133.2 127.3,140.0 125.1,149.4 123.6,154.0 123.9,156.4 127.0,153.8 131.1,155.7 140.3,155.0 154.4,154.6 167.3,151.2 179.3,145.4 190.1,139.1 198.0,136.1 200.7,133.5 203.3,129.2 198.2,126.8 192.2,126.0 181.5,128.1 171.0,130.9 163.7,134.8 157.2,138.6 152.3,143.5 144.1,148.3 145.5,151.9 148.5,157.8 155.9,164.2 161.5,168.4 170.2,174.1 178.7,178.4 185.1,181.6 196.6,184.3 201.3,187.6 200.9,189.4 200.8,185.8 198.7,185.4 190.6,182.6 176.5,182.0 166.7,179.9 155.9,179.3 142.5,179.8 132.8,177.2 125.8,174.1 124.5,173.4 123.5,170.6 124.6,165.3 125.4,164.4 131.1,155.5 143.7,147.3 157.9,138.4 173.3,131.0 184.5,123.4 193.4,121.0 204.4,118.4 209.1,112.1 207.7,115.8 206.8,121.7 199.6,135.6 187.0,149.3 176.1,164.5 164.4,175.9 153.6,191.1 144.7,205.0 140.6,215.1 143.7,220.0 145.1,216.4 151.4,209.1 161.1,196.5 174.1,183.0 183.7,166.5 199.4,151.5 207.0,136.2 204.8,122.7 202.3,115.4 201.3,111.8 195.7,110.0 190.2,110.1 185.5,111.7 177.7,115.8 173.2,122.1 172.7,128.2 177.5,134.5 181.5,140.7 187.1,144.5 193.7,149.3 195.9,153.7 198.8,155.1 200.9,152.3 199.9,149.8 194.3,148.0 188.7,144.6 177.1,143.1 162.2,140.3 155.0,136.2 148.4,133.4 146.2,132.1 144.7,126.5 150.0,122.7 156.1,120.1 166.3,117.5 181.7,116.8 194.0,119.1 208.1,117.9 217.7,124.7 227.2,130.5 234.2,136.8 236.9,141.3 236.6,146.4 235.4,154.2 230.4,154.6 218.7,159.6 212.5,155.9 203.2,157.2 192.7,153.1 183.8,147.4 178.8,142.4 173.4,134.1 170.8,126.7 173.4,123.4 173.8,123.8 173.6,124.3 178.0,125.4 181.3,133.0 184.9,142.2 189.4,152.7 196.7,164.8 200.4,170.6 199.0,175.1 205.3,181.8 203.7,186.9 209.5,184.7 213.5,178.9 218.6,171.7 222.2,157.8 223.9,149.3 231.4,137.2 234.2,127.2 237.8,121.2 236.6,119.5 234.8,117.6 232.7,116.7 234.0,124.3 233.1,133.5 228.5,145.2 227.6,154.2 226.0,166.4 226.3,180.7 227.1,193.9 226.1,204.5 221.0,210.5 223.5,211.3 226.2,211.0 229.2,208.8 231.2,204.6 236.1,193.4 238.8,184.7 242.7,175.3 244.2,166.5 240.3,160.6 235.2,158.3 226.9,155.9 219.8,154.8 203.1,157.5 190.8,159.0 176.4,161.6 165.7,168.1 156.2,176.2 151.8,179.2 147.1,180.3 144.8,180.1 153.1,178.4 159.9,173.7 171.3,167.1 181.0,158.2 189.7,148.0 198.1,134.1 205.0,124.5 207.3,115.4 205.2,109.0 203.3,106.2 195.3,105.2 191.7,104.7 186.2,105.2 179.4,111.0 174.9,118.5 172.7,128.9 173.8,141.6 179.0,154.5 185.7,169.1 190.1,182.0 197.2,192.2 202.7,203.6 207.3,216.6 210.4,223.6 209.5,226.5 201.2,229.9 195.0,231.3 191.0,230.8 181.8,228.6 175.4,221.3 170.4,205.1 163.5,191.2 164.6,178.8 171.5,163.5 175.5,144.3 178.0,133.8 187.9,125.1 198.3,120.4 204.6,125.4 212.9,133.2 217.3,139.0 216.8,151.8 215.8,167.5 214.0,183.3 208.3,197.7 200.3,207.5 194.3,214.5 183.9,215.2 172.3,219.5 163.3,216.3 154.7,210.5 149.3,201.1 146.1,195.7 144.0,188.7 144.7,180.9 151.4,177.8 159.3,175.1 169.4,176.5 181.7,177.4 193.0,179.9 204.0,182.0 213.9,187.2 223.9,190.3 226.3,193.4 227.8,189.5 222.3,186.4 212.4,183.2 197.9,176.4 180.5,166.7 159.5,157.0 140.1,149.3 127.9,142.8 123.1,145.5 120.7,143.8 119.4,144.9 120.0,146.2 121.8,150.7 126.2,151.9 137.5,158.5 155.4,166.1 173.4,170.0 186.8,176.8 203.8,183.0 215.0,191.9 220.9,195.6 225.1,206.9 222.7,211.2 215.1,217.8 201.1,224.9 189.9,226.5 173.6,227.1 157.8,226.1 151.6,225.5 142.6,220.8 139.2,218.8 140.0,215.1 145.7,203.0 160.8,196.1 174.8,190.4 194.5,187.6 208.6,186.4 221.2,187.6 232.4,185.0 233.6,184.9 238.3,191.2 226.9,199.9 223.8,205.3 214.1,207.7 202.8,206.8 190.3,206.6 175.0,206.3 168.8,204.1 159.4,204.5 159.6,198.1 154.4,193.4 152.8,190.1 158.4,189.5 165.6,187.5 180.2,187.5 187.4,193.3 193.1,196.0 198.7,202.0 204.9,204.6 211.8,208.4 212.5,208.7 209.9,209.0 199.1,209.6 192.9,202.9 188.7,190.2 183.5,175.6 174.2,164.3 165.1,150.3 155.1,140.9 149.4,131.5 148.5,123.8 143.8,121.2 141.8,125.3 139.2,132.9 139.9,142.2 139.2,153.2 143.4,164.8 146.0,178.2 144.9,190.7 145.9,198.7 145.0,205.7 141.3,211.7 140.1,214.3 141.0,216.7 138.2,214.1 139.9,213.3 140.8,213.3 147.2,212.8 151.8,213.3 163.7,212.2 172.9,211.1 181.2,208.5 189.5,211.9 196.5,212.6 204.1,209.9 207.2,210.6 213.3,207.9 215.2,204.9 219.9,207.0 222.3,207.0 221.1,208.1 222.5,209.7 225.6,214.1 227.8,216.8 226.9,221.7 227.1,223.1 228.2,222.7 226.9,222.5 232.6,218.4 233.4,215.8 230.2,209.7 229.4,199.0 226.3,186.4 220.9,174.0 212.5,161.8 205.7,152.0 195.4,143.3 188.2,131.3 183.3,123.3 176.8,120.0 168.1,120.5 162.8,125.5 154.0,130.5 152.0,135.2 153.0,142.6 150.4,151.1 151.4,154.5 152.4,156.6 154.9,157.3 158.3,152.2 168.7,145.7 175.2,138.6 180.0,128.1 186.8,122.7 193.0,117.9 198.7,114.5 205.9,111.8 211.1,114.2 215.6,120.4 214.9,129.1 215.3,136.1 210.4,145.9 203.7,154.9 193.8,167.0 189.0,178.3 181.9,187.0 174.1,193.9 172.5,195.9 168.4,204.1 172.5,207.3 176.0,210.0 186.8,210.0 192.7,206.4 201.8,201.2 211.6,195.1 220.0,191.8 227.6,180.5 229.8,168.6 233.2,159.4 232.1,149.7 230.6,143.0 224.0,138.6 217.4,133.3 205.5,128.2 195.9,127.7 186.8,129.9 176.9,132.1 171.0,138.9 163.7,145.7 161.2,155.3 157.3,166.2 161.3,176.8 162.8,183.4 166.8,189.4 169.4,195.0 171.1,190.8 175.9,189.2 176.3,179.8 176.9,173.9 173.5,163.7 172.7,159.4 169.5,156.2 164.6,152.3 159.3,153.2 151.4,153.3 149.6,157.6 146.6,158.8 144.6,165.5 139.9,163.6 138.6,161.1 142.0,158.9 147.1,152.6 151.3,144.8 156.6,138.1 159.3,128.2 163.7,120.4 172.2,120.6 176.1,120.9 178.9,127.6 174.2,140.7 173.3,150.3 169.2,166.9 165.9,185.4 162.0,200.6 155.2,213.1 153.3,219.8 150.5,218.1 156.6,210.7 162.0,207.3 164.0,190.2 171.0,173.3 181.1,159.1 188.2,141.7 191.9,131.0 201.2,126.5 203.6,128.5 202.2,131.2 206.3,143.8 207.4,154.7 203.1,163.2 204.1,175.7 205.6,183.9 203.9,187.3 205.0,184.3 210.4,176.8 209.7,164.5 212.4,154.0 214.2,145.7 212.2,132.6 210.2,125.6 203.0,121.3 195.6,125.5 186.1,133.6 176.6,144.3 166.9,156.4 157.3,170.6 152.1,190.0 145.7,199.9 143.5,207.7 143.4,210.7 139.9,212.8 143.2,209.5 146.2,202.6 150.4,189.6 149.2,173.3 145.8,163.0 146.5,148.8 142.1,135.7 143.2,121.6 143.9,115.4 143.0,113.2 140.1,114.2 140.9,114.5 145.5,115.9 146.6,122.5 157.4,132.2 166.2,144.7 176.1,160.5 186.8,172.5 201.3,182.6 211.9,198.2 219.9,207.9" stroke="#c4c400" stroke-width="1.15"/><polyline points="171.3,182.0 169.8,185.1 175.7,187.4 180.1,190.1 185.0,189.7 192.7,188.2 198.8,185.9 205.7,183.3 214.3,180.3 214.2,169.7 211.4,161.6 210.4,158.7 210.8,148.6 209.9,140.4 205.5,133.9 204.7,130.4 199.7,124.3 201.1,125.3 199.7,125.7 199.3,123.2 200.4,132.7 199.8,140.2 200.5,145.0 194.5,148.3 193.6,153.7 192.7,157.8 193.3,161.9 193.4,167.3 194.1,166.1 193.3,166.4 196.7,171.3 201.4,175.8 201.4,178.4 204.8,181.3 210.5,185.5 213.9,189.9 214.6,194.1 222.6,201.8 226.7,205.5 230.3,207.7 232.7,209.9 230.1,213.1 227.8,211.3 222.1,209.5 214.4,208.1 201.4,201.2 189.4,193.7 177.0,190.2 169.3,183.6 161.8,177.4 151.7,173.2 148.0,167.0 144.5,160.2 146.8,159.0 145.5,159.6 147.3,154.0 151.8,154.8 158.8,151.8 167.1,151.9 170.9,150.5 178.9,152.0 184.4,152.7 195.2,151.1 204.3,155.0 207.4,159.9 211.2,164.9 213.7,171.3 216.1,181.7 217.2,191.3 216.0,196.5 211.7,204.7 206.2,212.4 199.0,218.0 192.5,220.8 185.9,219.6 181.4,218.2 180.4,215.1 175.0,215.0 171.7,217.3 172.6,215.0 177.6,213.2 182.5,219.9 191.8,226.1 199.2,229.3 204.0,230.3 210.0,230.2 216.2,228.2 221.7,226.2 226.0,221.1 226.2,208.4 220.0,190.3 211.7,173.2 199.8,156.0 192.2,139.6 187.7,127.7 177.2,121.0 172.4,119.2 166.4,121.2 162.3,131.5 167.4,144.7 174.3,159.1 180.2,178.6 184.6,192.3 191.5,202.0 197.7,210.2 206.6,212.9 213.8,210.2 214.1,202.8 216.1,195.4 215.3,179.4 213.2,166.1 210.3,154.8 201.3,144.6 192.7,135.7 185.5,129.5 182.0,126.5 177.0,120.2 168.5,118.7 166.8,120.8 165.4,123.0 170.1,124.0 176.4,125.9 185.5,123.4 192.5,126.6 199.4,126.9 211.9,128.9 220.0,129.3 227.4,126.1 232.5,124.3 235.3,123.3 238.0,126.3 235.5,124.1 236.1,124.2 235.8,127.0 230.4,125.7 230.5,128.0 227.9,130.8 224.1,132.1 215.1,131.2 215.0,134.2 204.5,142.2 198.2,144.6 190.1,147.6 179.2,151.9 170.3,153.8 165.3,158.1 161.7,162.2 152.1,160.0 152.6,156.5 147.1,154.2 147.4,154.8 146.2,152.7 147.7,155.8 148.4,156.6 150.1,161.7 156.5,168.6 161.9,177.3 172.6,184.4 181.1,192.7 192.5,202.6 204.7,210.3 215.1,220.9 225.2,223.0 230.6,223.7 233.7,224.1 234.6,224.0 236.3,221.3 235.9,217.6 233.7,211.7 221.3,197.1 210.9,182.9 197.9,169.3 188.4,152.6 178.5,140.8 167.0,132.4 158.3,126.7 150.3,122.1 149.8,123.6 146.8,128.4 152.5,132.8 157.0,144.1 165.3,152.3 176.5,165.1 190.5,174.0 204.3,182.7 212.0,190.0 222.5,195.9 224.2,198.4 226.0,197.9 224.9,198.3 222.6,194.4 213.6,187.8 202.8,185.4 193.8,179.3 182.4,176.0 174.5,167.6 163.2,163.4 155.4,157.7 148.0,154.3 143.6,155.4 141.5,148.9 142.6,150.9 148.4,146.7 152.9,150.5 163.3,151.4 171.4,157.4 181.3,163.9 190.9,168.9 199.8,179.7 201.0,183.5 201.8,197.2 201.8,208.7 196.6,214.0 190.4,216.9 183.5,215.7 173.8,214.4 162.6,207.7 157.6,201.1 149.3,187.4 145.9,175.5 141.9,164.0 139.2,150.8 136.3,139.2 137.2,130.1 138.4,127.5 142.1,124.2 145.6,125.7 145.2,127.2 150.2,134.3 155.4,143.5 161.6,146.6 166.1,153.5 170.1,152.5 175.6,150.2 185.4,151.4 191.8,151.7 196.6,148.7 200.9,141.3 202.8,143.6 205.5,146.5 206.6,152.7 202.1,162.3 189.4,168.2 184.1,174.4 175.1,185.5 169.4,197.9 159.4,207.7 151.5,209.2 144.6,209.6 142.2,209.2 145.3,203.9 143.7,196.6 147.4,181.2 148.3,168.4 152.1,150.4 160.7,139.3 172.4,129.4 181.6,119.9 188.7,117.1 195.6,112.6 203.0,118.3 205.4,122.2 207.5,125.2 206.0,128.9 202.4,130.5 198.7,134.2 190.8,131.1 185.4,130.6 174.4,124.8 167.8,119.3 162.6,123.2 156.1,121.5 148.5,122.7 139.3,125.9 136.5,130.3 132.6,139.5 137.5,150.4 142.6,161.2 148.8,166.5 155.2,170.1 165.7,175.7 180.1,178.8 192.8,180.9 208.5,178.9 214.6,179.2 220.2,178.1 224.1,176.8 227.2,182.1 225.9,187.0 221.9,189.4 216.8,196.2 207.5,202.3 203.0,206.7 197.7,209.5 199.4,211.2 198.4,208.8 199.7,202.3 204.3,198.1 209.9,188.6 217.1,180.4 223.4,169.9 225.8,158.5 226.5,152.8 225.8,153.1 223.6,157.7 218.4,160.4 212.8,170.4 202.5,183.0 188.6,193.0 184.7,204.6 175.2,214.9 169.3,216.2 171.2,213.4 175.9,206.6 180.3,197.2 193.4,180.1 207.2,166.3 213.2,155.6 223.4,142.2 230.1,136.6 228.8,135.1 224.1,142.0 217.6,146.3 205.6,157.2 195.9,169.4 180.6,182.9 166.1,196.7 153.1,206.1 143.7,209.9 137.1,207.4 132.5,204.0 131.4,195.8 130.7,186.2 138.9,169.0 145.9,154.0 155.0,137.9 161.2,127.0 166.4,121.8 175.3,117.9 177.8,119.3 186.0,120.7 190.6,129.1 193.3,138.5 196.2,146.5 202.6,155.2 209.0,160.7 212.8,166.3 222.4,169.5 224.3,173.2 227.7,176.8 231.9,180.1 234.4,184.1 233.1,187.4 229.1,194.3 226.6,199.9 219.2,208.2 214.9,216.0 210.7,220.9 204.7,219.9 202.6,217.3 200.0,216.1 201.2,207.6 201.9,198.8 207.2,185.9 210.1,168.8 211.8,153.0 211.5,141.5 209.4,133.1 206.3,127.1 200.2,125.9 190.4,127.4 180.6,130.3 171.8,139.4 162.9,151.6 158.0,163.7 153.4,175.5 151.5,187.5 150.0,194.6 151.1,201.2 152.6,209.8 158.0,216.5 160.5,217.5 165.0,220.8 166.9,221.0 170.6,215.3 172.7,208.8 175.8,203.8 173.7,197.5 173.0,190.4 173.9,186.7 173.8,181.6 174.1,181.2 177.9,184.6 182.2,191.4 189.1,198.7 198.5,204.4 202.4,209.6 211.7,216.8 219.9,217.5 225.3,218.9 227.1,216.3 226.8,212.5 223.9,203.2 216.2,194.2 207.0,183.2 194.8,165.5 184.0,153.0 178.2,138.1 170.5,127.0 165.8,115.5 160.6,111.6 164.8,110.9 169.9,110.1 179.2,117.4 186.9,122.1 191.9,126.5 201.6,127.1 212.6,127.9 220.2,126.2 224.9,122.8 231.6,120.3 232.5,116.7 230.6,115.7 229.2,116.0 228.9,120.6 225.1,127.7 224.2,141.4 220.1,154.0 218.1,168.3 209.1,186.0 206.9,196.4 209.1,207.3 201.4,214.9 202.3,220.8 201.3,217.4 201.8,215.1 197.8,209.6 199.6,202.7 203.3,197.0 202.3,189.0 208.7,179.3 209.1,175.8 208.9,172.0 209.8,168.8 209.8,170.4 209.3,169.9 210.8,173.9 212.7,179.6 212.2,186.3 208.8,189.4 207.4,194.0 201.8,196.2 199.3,195.7 196.0,197.3 189.9,194.6 182.0,192.6 174.4,185.6 169.5,178.5 164.6,168.2 161.8,161.4 160.4,151.8 162.0,139.2 163.9,131.0 165.9,123.7 171.1,123.0 179.0,121.8 187.9,127.5 200.4,131.6 211.3,136.7 219.0,146.3 223.2,153.5 230.2,158.0 230.1,160.9 227.6,162.9 221.3,163.6 212.4,159.7 199.4,156.3 189.3,146.5 180.9,139.1 172.0,130.5 170.1,122.6 164.7,117.5 163.0,110.5 159.3,110.0 160.9,109.7 162.4,109.8 166.1,112.0 168.7,118.5 170.3,124.1 167.2,128.7 168.6,139.2 169.5,147.9 171.5,152.2 173.9,159.6 172.1,161.3 168.6,159.0 162.6,157.4 167.1,157.2 167.9,150.7 172.3,140.3 178.0,134.9 181.6,128.0 187.5,123.2 195.7,122.8 207.2,124.7 212.3,123.7 215.6,122.8 213.8,135.5 211.1,147.2 209.8,157.0 205.3,167.6 201.7,176.5 193.6,182.7 188.8,193.4 181.7,203.8 182.4,206.1 175.6,210.7 168.9,210.3 161.1,214.5 153.9,213.6 147.3,213.3 143.2,211.7 143.7,212.0 141.3,208.4 141.0,201.2 140.9,200.3 146.4,190.7 147.7,185.7 150.2,181.1 152.9,173.8 152.6,164.2 151.2,155.4 151.9,145.1 150.4,135.6 148.0,132.5 148.0,129.8 146.3,125.5 145.5,120.0 143.2,119.3 142.6,119.8 142.7,126.6 142.8,130.1 140.1,130.2 140.7,130.7 142.8,131.8 143.6,135.0 142.7,133.7 142.1,130.8 138.0,126.7 139.0,126.6 140.1,127.4 136.7,126.7 136.9,125.6 135.4,127.0 138.6,132.1 142.7,137.3 149.1,137.8 153.7,141.1 159.8,144.0 168.4,147.2 176.1,153.9 182.7,157.6 191.4,156.7 197.8,156.4 201.5,156.9 210.1,157.3 215.4,151.3 221.8,150.7 223.3,148.7 227.5,143.8 229.3,143.0 232.2,144.4 233.8,146.0 225.8,142.5 221.4,147.3 212.8,149.5 206.1,148.8 194.9,151.4 184.4,152.1 173.1,152.0 162.9,151.8 156.1,154.6 150.8,153.2 148.4,154.5 150.7,156.1 155.3,161.7 159.3,166.2 166.1,170.6 175.6,178.8 185.6,183.1 196.0,189.4 203.3,191.7 208.3,192.2 211.5,189.3 210.5,184.8 205.5,182.8 199.1,172.3 192.1,164.6 184.6,159.6 182.2,153.8 175.5,148.8 172.9,146.9 176.2,148.8 178.9,146.1 181.2,150.9 182.2,155.4 185.8,156.8 180.4,154.0 180.2,157.5 174.3,155.2 166.1,151.5 158.9,150.0 151.9,147.7 148.3,143.8 140.8,142.2 144.4,144.8 145.5,148.6 153.4,154.2 161.9,162.5 174.9,165.5 187.1,170.6 200.2,176.3 215.5,181.2 224.9,183.3 232.0,181.1 237.7,178.7 241.3,172.9 241.6,167.8 244.0,162.2 242.0,159.0 237.7,154.9 236.0,155.8 235.7,157.3 234.7,159.9 236.5,164.6 238.7,175.4 235.7,184.9 236.9,194.3 237.5,204.1 233.3,206.1 235.1,208.0 233.6,207.6 225.0,203.5 213.8,198.5 211.7,190.9 205.9,179.6 200.2,167.4 198.7,159.7 194.7,153.9 193.9,149.2 203.4,151.0 213.3,150.3 219.8,151.3 224.4,151.5 228.0,156.6 229.4,161.9 225.3,160.6 220.3,162.9 208.8,160.2 197.5,158.9 182.3,157.6 168.8,159.0 157.8,154.4 149.2,154.2 148.1,157.4 150.5,159.5 153.7,163.9 164.8,167.8 176.3,173.2 194.2,177.6 209.0,182.3 226.1,184.3 239.8,188.3 245.1,186.1 248.9,183.2 248.5,180.7 247.1,176.2 243.1,169.2 240.4,165.1 236.2,160.6 229.9,154.6 223.9,151.2 221.3,148.7 221.0,149.8 223.1,151.9 225.2,158.8 227.5,165.4 228.8,172.2 233.0,182.0 238.0,196.1 237.8,206.2 236.8,212.7 235.4,216.6 233.7,219.2 233.7,220.7 233.6,217.9 230.3,210.2 227.7,197.1 230.0,182.7 226.9,169.1 223.9,153.3 221.1,140.2 217.6,124.9 214.6,122.1 212.3,120.2 208.2,116.5 201.4,124.2 199.4,129.7 195.7,142.6 191.1,154.2 185.9,167.3 182.5,175.1 179.6,181.4 178.7,190.1 180.4,191.4 181.5,190.2 179.6,185.7 181.0,178.9 180.4,171.5 178.1,161.5 178.2,156.0 176.2,147.0 173.2,138.8 167.8,134.3 169.9,130.1 168.5,126.4 169.0,127.4 170.8,126.5 172.6,128.6 174.1,133.4 177.2,134.0 181.1,140.6 182.4,141.7 181.0,143.6 180.2,144.1 178.1,150.5 171.0,152.7 167.1,153.2 156.5,164.0 149.1,166.6 143.2,173.0 139.9,179.2 137.9,183.3 140.1,185.2 146.3,184.1 153.0,183.0 164.0,176.8 175.8,172.9 185.2,169.4 196.7,165.2 202.8,165.0 205.0,161.8 206.5,160.7 199.8,162.6 192.7,164.2 180.7,166.3 173.0,169.7 161.2,169.6 154.7,169.0 146.9,173.4 144.9,180.7 152.3,185.8 161.1,190.5 174.4,196.7 186.2,199.3 200.2,203.8 213.7,208.8 226.9,212.2 232.6,209.6 235.2,209.1 235.8,207.9 230.8,201.3 222.9,197.2 216.9,195.0 207.6,189.3 205.6,185.5 203.1,181.3 199.7,181.3 196.3,180.3 200.5,183.6 205.2,191.8 212.4,194.8 221.0,200.9 222.7,206.7 229.4,215.4 234.1,217.6 236.2,220.1 235.1,222.8 236.6,221.4 233.5,224.2 231.6,223.7 233.4,217.8 231.8,213.1 225.2,203.0 224.4,190.6 226.0,177.6 226.2,162.7 228.5,149.2 233.9,137.1 232.3,131.4 231.5,126.0 234.5,126.5 236.4,129.3 233.1,135.7 230.4,146.3 227.2,155.4 218.6,166.8 215.0,176.7 210.2,184.8 204.9,187.2 195.2,188.7 191.1,187.4 185.0,182.5 181.2,175.9 177.6,170.7 175.0,160.0 174.0,150.9 172.6,142.5 174.3,134.8 175.7,129.1 177.3,129.4 174.2,127.2 172.5,121.4 172.9,125.3 169.7,128.9 164.7,133.4 163.8,135.8 156.5,139.5 149.2,136.2 146.9,140.0 143.8,145.3 142.7,146.6 147.1,146.9 155.7,147.7 156.1,151.1 166.7,153.1 182.3,162.9 195.9,166.8 210.7,169.1 221.6,175.3 232.3,181.9 241.7,192.8 247.2,201.5 247.5,205.7 247.6,208.4 245.6,212.3 243.6,216.0 239.3,218.5 232.5,219.5 224.1,212.5 210.0,199.2 194.3,187.1 179.4,168.8 167.6,156.1 155.9,145.3 147.7,130.0 143.3,122.5 142.1,119.1 144.2,115.9 149.1,114.0 156.3,119.6 162.8,124.9 167.3,131.8 172.4,140.4 175.9,147.0 175.1,154.4 173.8,165.1 174.0,174.4 172.2,179.6 171.9,182.3 173.0,181.8 175.6,183.6 180.8,184.0 182.0,184.6 190.5,186.0 200.1,185.7 205.9,184.5 214.7,186.1 225.4,188.3 230.1,188.4 233.1,189.4 240.3,187.3 239.9,182.5 234.5,182.5 230.4,181.7 218.9,178.1 206.2,179.3 200.8,179.2 193.9,179.0 187.5,183.9 183.1,186.4 179.6,187.9 175.7,193.3 176.3,201.3 177.5,204.2 175.5,209.6 175.1,211.5 170.9,215.5 165.3,218.7 160.0,219.7 158.6,222.6 154.7,221.6 153.5,219.4 149.1,218.1 144.1,217.2 140.9,210.6 141.5,207.1 147.1,207.5 145.4,202.3 150.9,201.7 155.9,204.4 162.8,207.3 174.4,208.7 186.7,214.7 200.2,219.1 211.1,217.4 222.0,219.8 230.7,218.1 233.1,215.9 239.0,210.3 240.0,206.5 237.4,201.6 229.6,191.9 219.2,185.8 211.2,174.7 199.0,165.2 194.4,157.5 186.8,153.6 178.4,152.4 176.1,150.6 175.0,156.5 176.4,165.6 178.9,175.2 181.2,184.6 180.1,193.5 178.3,201.0 174.4,205.6 167.5,203.9 161.6,203.2 153.4,191.6 146.8,183.8 142.8,175.9 141.3,163.8 138.4,155.9 145.7,150.7 154.1,150.5 160.0,152.8 172.4,155.4 184.1,162.4 196.4,166.3 207.1,176.7 217.3,178.7 222.4,179.1 222.3,181.8 224.4,174.5 222.0,175.0 219.4,166.2 211.9,163.7 206.1,156.6 200.9,151.3 197.1,150.1 197.0,146.7 198.7,150.7 203.9,151.7 206.2,156.5 213.1,155.3 217.6,157.0 220.0,157.7 221.7,155.1 224.3,151.3 226.3,143.6 221.9,138.5 218.7,132.5 212.6,129.7 203.9,125.6 203.1,124.8 203.0,128.1 202.8,134.4 201.1,142.3 201.5,151.1 203.2,160.7 209.5,171.1 213.9,183.3 213.5,185.9 209.9,188.7 202.4,187.8 195.6,183.6 191.3,178.4 183.0,172.5 175.1,164.9 169.7,156.3 168.6,157.3 169.5,155.6 177.1,153.5 187.7,160.8 193.2,162.0 208.2,164.9 217.8,171.0 224.3,174.2 227.6,175.7 229.6,176.7 225.3,175.1 213.3,166.8 204.8,160.1 189.8,153.7 173.4,144.9 162.0,137.9 151.2,135.8 144.5,131.2 144.7,133.8 145.2,143.3 150.0,153.6 157.3,165.2 167.8,179.2 179.6,194.4 193.4,201.3 205.2,210.3 213.8,212.1 226.5,206.4 233.1,200.7 235.5,191.8 240.5,180.4 241.7,166.1 240.9,158.2 232.0,150.1 225.6,146.4 213.3,148.4 202.1,151.6 193.4,157.1 183.6,165.2 176.1,171.2 165.9,178.0 167.4,181.4 164.4,185.4 168.4,181.8 173.3,180.9 174.3,180.3 175.8,178.9 174.9,179.1 179.2,179.2 178.0,182.0 178.0,188.3 176.3,198.3 171.3,205.5 171.6,210.7 169.6,213.0 171.4,217.3 173.0,214.7 172.3,208.8 177.6,199.7 181.9,187.8 190.4,175.3 200.4,164.3 212.7,151.9 224.0,138.3 229.1,131.7 239.1,132.4 242.4,133.6 243.4,137.6 244.3,150.2 242.9,161.3 238.7,171.4 235.7,188.5 235.2,201.8 234.5,207.6 234.9,214.2 236.3,216.3 238.0,212.6 241.6,206.7 243.7,201.9 240.3,188.4 239.3,174.4 233.2,164.0 226.4,147.9 217.2,136.8 205.8,125.1 192.6,120.2 178.6,116.3 167.6,119.8 154.0,123.2 143.6,127.0 131.5,133.2 127.3,140.0 125.1,149.4 123.6,154.0 123.9,156.4 127.0,153.8 131.1,155.7 140.3,155.0 154.4,154.6 167.3,151.2 179.3,145.4 190.1,139.1 198.0,136.1 200.7,133.5 203.3,129.2 198.2,126.8 192.2,126.0 181.5,128.1 171.0,130.9 163.7,134.8 157.2,138.6 152.3,143.5 144.1,148.3 145.5,151.9 148.5,157.8 155.9,164.2 161.5,168.4 170.2,174.1 178.7,178.4 185.1,181.6 196.6,184.3 201.3,187.6 200.9,189.4 200.8,185.8 198.7,185.4 190.6,182.6 176.5,182.0 166.7,179.9 155.9,179.3 142.5,179.8 132.8,177.2 125.8,174.1 124.5,173.4 123.5,170.6 124.6,165.3 125.4,164.4 131.1,155.5 143.7,147.3 157.9,138.4 173.3,131.0 184.5,123.4 193.4,121.0 204.4,118.4 209.1,112.1 207.7,115.8 206.8,121.7 199.6,135.6 187.0,149.3 176.1,164.5 164.4,175.9 153.6,191.1 144.7,205.0 140.6,215.1 143.7,220.0 145.1,216.4 151.4,209.1 161.1,196.5 174.1,183.0 183.7,166.5 199.4,151.5 207.0,136.2 204.8,122.7 202.3,115.4 201.3,111.8 195.7,110.0 190.2,110.1 185.5,111.7 177.7,115.8 173.2,122.1 172.7,128.2 177.5,134.5 181.5,140.7 187.1,144.5 193.7,149.3 195.9,153.7 198.8,155.1 200.9,152.3 199.9,149.8 194.3,148.0 188.7,144.6 177.1,143.1 162.2,140.3 155.0,136.2 148.4,133.4 146.2,132.1 144.7,126.5 150.0,122.7 156.1,120.1 166.3,117.5 181.7,116.8 194.0,119.1 208.1,117.9 217.7,124.7 227.2,130.5 234.2,136.8 236.9,141.3 236.6,146.4 235.4,154.2 230.4,154.6 218.7,159.6 212.5,155.9 203.2,157.2 192.7,153.1 183.8,147.4 178.8,142.4 173.4,134.1 170.8,126.7 173.4,123.4 173.8,123.8 173.6,124.3 178.0,125.4 181.3,133.0 184.9,142.2 189.4,152.7 196.7,164.8 200.4,170.6 199.0,175.1 205.3,181.8 203.7,186.9 209.5,184.7 213.5,178.9 218.6,171.7 222.2,157.8 223.9,149.3 231.4,137.2 234.2,127.2 237.8,121.2 236.6,119.5 234.8,117.6 232.7,116.7 234.0,124.3 233.1,133.5 228.5,145.2 227.6,154.2 226.0,166.4 226.3,180.7 227.1,193.9 226.1,204.5 221.0,210.5 223.5,211.3 226.2,211.0 229.2,208.8 231.2,204.6 236.1,193.4 238.8,184.7 242.7,175.3 244.2,166.5 240.3,160.6 235.2,158.3 226.9,155.9 219.8,154.8 203.1,157.5 190.8,159.0 176.4,161.6 165.7,168.1 156.2,176.2 151.8,179.2 147.1,180.3 144.8,180.1 153.1,178.4 159.9,173.7 171.3,167.1 181.0,158.2 189.7,148.0 198.1,134.1 205.0,124.5 207.3,115.4 205.2,109.0 203.3,106.2 195.3,105.2 191.7,104.7 186.2,105.2 179.4,111.0 174.9,118.5 172.7,128.9 173.8,141.6 179.0,154.5 185.7,169.1 190.1,182.0 197.2,192.2 202.7,203.6 207.3,216.6 210.4,223.6 209.5,226.5 201.2,229.9 195.0,231.3 191.0,230.8 181.8,228.6 175.4,221.3 170.4,205.1 163.5,191.2 164.6,178.8 171.5,163.5 175.5,144.3 178.0,133.8 187.9,125.1 198.3,120.4 204.6,125.4 212.9,133.2 217.3,139.0 216.8,151.8 215.8,167.5 214.0,183.3 208.3,197.7 200.3,207.5 194.3,214.5 183.9,215.2 172.3,219.5 163.3,216.3 154.7,210.5 149.3,201.1 146.1,195.7 144.0,188.7 144.7,180.9 151.4,177.8 159.3,175.1 169.4,176.5 181.7,177.4 193.0,179.9 204.0,182.0 213.9,187.2 223.9,190.3 226.3,193.4 227.8,189.5 222.3,186.4 212.4,183.2 197.9,176.4 180.5,166.7 159.5,157.0 140.1,149.3 127.9,142.8 123.1,145.5 120.7,143.8 119.4,144.9 120.0,146.2 121.8,150.7 126.2,151.9 137.5,158.5 155.4,166.1 173.4,170.0 186.8,176.8 203.8,183.0 215.0,191.9 220.9,195.6 225.1,206.9 222.7,211.2 215.1,217.8 201.1,224.9 189.9,226.5 173.6,227.1 157.8,226.1 151.6,225.5 142.6,220.8 139.2,218.8 140.0,215.1 145.7,203.0 160.8,196.1 174.8,190.4 194.5,187.6 208.6,186.4 221.2,187.6 232.4,185.0 233.6,184.9 238.3,191.2 226.9,199.9 223.8,205.3 214.1,207.7 202.8,206.8 190.3,206.6 175.0,206.3 168.8,204.1 159.4,204.5 159.6,198.1 154.4,193.4 152.8,190.1 158.4,189.5 165.6,187.5 180.2,187.5 187.4,193.3 193.1,196.0 198.7,202.0 204.9,204.6 211.8,208.4 212.5,208.7 209.9,209.0 199.1,209.6 192.9,202.9 188.7,190.2 183.5,175.6 174.2,164.3 165.1,150.3 155.1,140.9 149.4,131.5 148.5,123.8 143.8,121.2 141.8,125.3 139.2,132.9 139.9,142.2 139.2,153.2 143.4,164.8 146.0,178.2 144.9,190.7 145.9,198.7 145.0,205.7 141.3,211.7 140.1,214.3 141.0,216.7 138.2,214.1 139.9,213.3 140.8,213.3 147.2,212.8 151.8,213.3 163.7,212.2 172.9,211.1 181.2,208.5 189.5,211.9 196.5,212.6 204.1,209.9 207.2,210.6 213.3,207.9 215.2,204.9 219.9,207.0 222.3,207.0 221.1,208.1 222.5,209.7 225.6,214.1 227.8,216.8 226.9,221.7 227.1,223.1 228.2,222.7 226.9,222.5 232.6,218.4 233.4,215.8 230.2,209.7 229.4,199.0 226.3,186.4 220.9,174.0 212.5,161.8 205.7,152.0 195.4,143.3 188.2,131.3 183.3,123.3 176.8,120.0 168.1,120.5 162.8,125.5 154.0,130.5 152.0,135.2 153.0,142.6 150.4,151.1 151.4,154.5 152.4,156.6 154.9,157.3 158.3,152.2 168.7,145.7 175.2,138.6 180.0,128.1 186.8,122.7 193.0,117.9 198.7,114.5 205.9,111.8 211.1,114.2 215.6,120.4 214.9,129.1 215.3,136.1 210.4,145.9 203.7,154.9 193.8,167.0 189.0,178.3 181.9,187.0 174.1,193.9 172.5,195.9 168.4,204.1 172.5,207.3 176.0,210.0 186.8,210.0 192.7,206.4 201.8,201.2 211.6,195.1 220.0,191.8 227.6,180.5 229.8,168.6 233.2,159.4 232.1,149.7 230.6,143.0 224.0,138.6 217.4,133.3 205.5,128.2 195.9,127.7 186.8,129.9 176.9,132.1 171.0,138.9 163.7,145.7 161.2,155.3 157.3,166.2 161.3,176.8 162.8,183.4 166.8,189.4 169.4,195.0 171.1,190.8 175.9,189.2 176.3,179.8 176.9,173.9 173.5,163.7 172.7,159.4 169.5,156.2 164.6,152.3 159.3,153.2 151.4,153.3 149.6,157.6 146.6,158.8 144.6,165.5 139.9,163.6 138.6,161.1 142.0,158.9 147.1,152.6 151.3,144.8 156.6,138.1 159.3,128.2 163.7,120.4 172.2,120.6 176.1,120.9 178.9,127.6 174.2,140.7 173.3,150.3 169.2,166.9 165.9,185.4 162.0,200.6 155.2,213.1 153.3,219.8 150.5,218.1 156.6,210.7 162.0,207.3 164.0,190.2 171.0,173.3 181.1,159.1 188.2,141.7 191.9,131.0 201.2,126.5 203.6,128.5 202.2,131.2 206.3,143.8 207.4,154.7 203.1,163.2 204.1,175.7 205.6,183.9 203.9,187.3 205.0,184.3 210.4,176.8 209.7,164.5 212.4,154.0 214.2,145.7 212.2,132.6 210.2,125.6 203.0,121.3 195.6,125.5 186.1,133.6 176.6,144.3 166.9,156.4 157.3,170.6 152.1,190.0 145.7,199.9 143.5,207.7 143.4,210.7 139.9,212.8 143.2,209.5 146.2,202.6 150.4,189.6 149.2,173.3 145.8,163.0 146.5,148.8 142.1,135.7 143.2,121.6 143.9,115.4 143.0,113.2 140.1,114.2 140.9,114.5 145.5,115.9 146.6,122.5 157.4,132.2 166.2,144.7 176.1,160.5 186.8,172.5 201.3,182.6 211.9,198.2 219.9,207.9" stroke="#ffff30" stroke-width="0.45"/></g>
<circle cx="144.9" cy="210.9" r="2.0" fill="#ff2a10"/>
<circle cx="144.6" cy="209.4" r="2.0" fill="#ff2a10"/>
<circle cx="144.4" cy="209.3" r="2.0" fill="#ff2a10"/>
<circle cx="145.0" cy="212.1" r="2.0" fill="#ff2a10"/>
<circle cx="144.3" cy="209.8" r="2.0" fill="#ff2a10"/>
<circle cx="145.5" cy="210.9" r="2.0" fill="#ff2a10"/>
<circle cx="145.0" cy="209.4" r="2.0" fill="#ff2a10"/>
<circle cx="144.9" cy="183.1" r="2.0" fill="#ff2a10"/>
<circle cx="143.3" cy="181.8" r="2.0" fill="#ff2a10"/>
<circle cx="142.6" cy="180.8" r="2.0" fill="#ff2a10"/>
<circle cx="142.7" cy="182.0" r="2.0" fill="#ff2a10"/>
<circle cx="143.4" cy="182.6" r="2.0" fill="#ff2a10"/>
<circle cx="145.1" cy="182.1" r="2.0" fill="#ff2a10"/>
<circle cx="141.9" cy="181.7" r="2.0" fill="#ff2a10"/>
<circle cx="144.8" cy="154.2" r="2.0" fill="#ff2a10"/>
<circle cx="143.1" cy="153.5" r="2.0" fill="#ff2a10"/>
<circle cx="143.7" cy="153.1" r="2.0" fill="#ff2a10"/>
<circle cx="146.2" cy="153.1" r="2.0" fill="#ff2a10"/>
<circle cx="144.9" cy="155.2" r="2.0" fill="#ff2a10"/>
<circle cx="144.2" cy="154.0" r="2.0" fill="#ff2a10"/>
<circle cx="145.0" cy="154.2" r="2.0" fill="#ff2a10"/>
<circle cx="143.4" cy="126.0" r="2.0" fill="#ff2a10"/>
<circle cx="146.5" cy="124.0" r="2.0" fill="#ff2a10"/>
<circle cx="145.9" cy="126.0" r="2.0" fill="#ff2a10"/>
<circle cx="144.1" cy="128.3" r="2.0" fill="#ff2a10"/>
<circle cx="145.8" cy="124.5" r="2.0" fill="#ff2a10"/>
<circle cx="145.0" cy="126.6" r="2.0" fill="#ff2a10"/>
<circle cx="144.7" cy="126.7" r="2.0" fill="#ff2a10"/>
<circle cx="173.2" cy="211.3" r="2.0" fill="#ff2a10"/>
<circle cx="175.0" cy="209.7" r="2.0" fill="#ff2a10"/>
<circle cx="173.5" cy="209.9" r="2.0" fill="#ff2a10"/>
<circle cx="173.5" cy="209.1" r="2.0" fill="#ff2a10"/>
<circle cx="172.6" cy="210.3" r="2.0" fill="#ff2a10"/>
<circle cx="174.4" cy="211.9" r="2.0" fill="#ff2a10"/>
<circle cx="171.7" cy="209.5" r="2.0" fill="#ff2a10"/>
<circle cx="174.1" cy="179.9" r="2.0" fill="#ff2a10"/>
<circle cx="172.7" cy="182.2" r="2.0" fill="#ff2a10"/>
<circle cx="174.8" cy="183.1" r="2.0" fill="#ff2a10"/>
<circle cx="172.9" cy="181.9" r="2.0" fill="#ff2a10"/>
<circle cx="173.0" cy="184.1" r="2.0" fill="#ff2a10"/>
<circle cx="172.8" cy="181.9" r="2.0" fill="#ff2a10"/>
<circle cx="173.7" cy="182.2" r="2.0" fill="#ff2a10"/>
<circle cx="173.1" cy="152.8" r="2.0" fill="#ff2a10"/>
<circle cx="173.3" cy="153.6" r="2.0" fill="#ff2a10"/>
<circle cx="174.7" cy="154.9" r="2.0" fill="#ff2a10"/>
<circle cx="173.3" cy="154.9" r="2.0" fill="#ff2a10"/>
<circle cx="172.9" cy="155.4" r="2.0" fill="#ff2a10"/>
<circle cx="173.3" cy="154.8" r="2.0" fill="#ff2a10"/>
<circle cx="171.8" cy="154.5" r="2.0" fill="#ff2a10"/>
<circle cx="171.3" cy="123.5" r="2.0" fill="#ff2a10"/>
<circle cx="172.9" cy="124.8" r="2.0" fill="#ff2a10"/>
<circle cx="173.5" cy="128.6" r="2.0" fill="#ff2a10"/>
<circle cx="172.3" cy="125.2" r="2.0" fill="#ff2a10"/>
<circle cx="173.5" cy="126.5" r="2.0" fill="#ff2a10"/>
<circle cx="173.1" cy="125.7" r="2.0" fill="#ff2a10"/>
<circle cx="174.1" cy="126.5" r="2.0" fill="#ff2a10"/>
<circle cx="200.5" cy="210.4" r="2.0" fill="#ff2a10"/>
<circle cx="201.7" cy="209.2" r="2.0" fill="#ff2a10"/>
<circle cx="202.0" cy="209.5" r="2.0" fill="#ff2a10"/>
<circle cx="202.9" cy="210.7" r="2.0" fill="#ff2a10"/>
<circle cx="201.8" cy="209.8" r="2.0" fill="#ff2a10"/>
<circle cx="201.6" cy="208.1" r="2.0" fill="#ff2a10"/>
<circle cx="200.3" cy="210.9" r="2.0" fill="#ff2a10"/>
<circle cx="199.1" cy="183.3" r="2.0" fill="#ff2a10"/>
<circle cx="199.6" cy="183.2" r="2.0" fill="#ff2a10"/>
<circle cx="200.7" cy="183.2" r="2.0" fill="#ff2a10"/>
<circle cx="201.9" cy="180.5" r="2.0" fill="#ff2a10"/>
<circle cx="203.2" cy="184.0" r="2.0" fill="#ff2a10"/>
<circle cx="201.6" cy="182.0" r="2.0" fill="#ff2a10"/>
<circle cx="201.5" cy="181.1" r="2.0" fill="#ff2a10"/>
<circle cx="203.0" cy="153.4" r="2.0" fill="#ff2a10"/>
<circle cx="201.6" cy="153.1" r="2.0" fill="#ff2a10"/>
<circle cx="200.9" cy="152.6" r="2.0" fill="#ff2a10"/>
<circle cx="203.2" cy="153.9" r="2.0" fill="#ff2a10"/>
<circle cx="202.9" cy="154.1" r="2.0" fill="#ff2a10"/>
<circle cx="200.9" cy="153.7" r="2.0" fill="#ff2a10"/>
<circle cx="201.0" cy="154.1" r="2.0" fill="#ff2a10"/>
<circle cx="201.2" cy="125.5" r="2.0" fill="#ff2a10"/>
<circle cx="200.0" cy="124.9" r="2.0" fill="#ff2a10"/>
<circle cx="203.7" cy="125.1" r="2.0" fill="#ff2a10"/>
<circle cx="200.4" cy="126.3" r="2.0" fill="#ff2a10"/>
<circle cx="203.4" cy="124.2" r="2.0" fill="#ff2a10"/>
<circle cx="201.4" cy="125.1" r="2.0" fill="#ff2a10"/>
<circle cx="199.6" cy="126.8" r="2.0" fill="#ff2a10"/>
<circle cx="230.1" cy="210.6" r="2.0" fill="#ff2a10"/>
<circle cx="229.2" cy="211.0" r="2.0" fill="#ff2a10"/>
<circle cx="229.5" cy="210.3" r="2.0" fill="#ff2a10"/>
<circle cx="228.8" cy="209.0" r="2.0" fill="#ff2a10"/>
<circle cx="231.7" cy="209.9" r="2.0" fill="#ff2a10"/>
<circle cx="230.5" cy="210.5" r="2.0" fill="#ff2a10"/>
<circle cx="229.6" cy="209.9" r="2.0" fill="#ff2a10"/>
<circle cx="230.9" cy="181.9" r="2.0" fill="#ff2a10"/>
<circle cx="229.9" cy="182.3" r="2.0" fill="#ff2a10"/>
<circle cx="231.5" cy="183.1" r="2.0" fill="#ff2a10"/>
<circle cx="230.6" cy="181.6" r="2.0" fill="#ff2a10"/>
<circle cx="228.4" cy="183.4" r="2.0" fill="#ff2a10"/>
<circle cx="231.3" cy="182.1" r="2.0" fill="#ff2a10"/>
<circle cx="230.8" cy="183.2" r="2.0" fill="#ff2a10"/>
<circle cx="231.1" cy="155.2" r="2.0" fill="#ff2a10"/>
<circle cx="229.6" cy="155.9" r="2.0" fill="#ff2a10"/>
<circle cx="228.6" cy="155.1" r="2.0" fill="#ff2a10"/>
<circle cx="230.7" cy="155.1" r="2.0" fill="#ff2a10"/>
<circle cx="232.4" cy="155.9" r="2.0" fill="#ff2a10"/>
<circle cx="228.7" cy="152.1" r="2.0" fill="#ff2a10"/>
<circle cx="231.1" cy="152.9" r="2.0" fill="#ff2a10"/>
<circle cx="230.1" cy="126.9" r="2.0" fill="#ff2a10"/>
<circle cx="228.1" cy="123.4" r="2.0" fill="#ff2a10"/>
<circle cx="230.4" cy="126.0" r="2.0" fill="#ff2a10"/>
<circle cx="229.8" cy="125.9" r="2.0" fill="#ff2a10"/>
<circle cx="229.1" cy="124.1" r="2.0" fill="#ff2a10"/>
<circle cx="229.9" cy="124.7" r="2.0" fill="#ff2a10"/>
<circle cx="228.1" cy="126.5" r="2.0" fill="#ff2a10"/>
<rect x="355" y="110" width="244" height="1" fill="#35312c" />
<rect x="355" y="124" width="244" height="1" fill="#35312c" />
<rect x="355" y="139" width="244" height="1" fill="#35312c" />
<rect x="355" y="154" width="244" height="1" fill="#35312c" />
<rect x="355" y="168" width="244" height="1" fill="#35312c" />
<rect x="355" y="183" width="244" height="1" fill="#35312c" />
<rect x="355" y="198" width="244" height="1" fill="#35312c" />
<rect x="355" y="213" width="244" height="1" fill="#35312c" />
<rect x="355" y="227" width="244" height="1" fill="#35312c" />
<rect x="477" y="96" width="1" height="146" fill="#35312c" />
<rect x="355.5" y="95.5" width="243" height="146.5" fill="none" stroke="#6a6256" stroke-width="1.5"/>
<text xml:space="preserve" x="354.0" y="93.0" font-family="Liberation Sans" font-size="8.7" fill="#d8d8d8" font-weight="normal" text-anchor="start" textLength="44.0" lengthAdjust="spacingAndGlyphs" >Rng 400 mV</text>
<text xml:space="preserve" x="352.0" y="103.0" font-family="Liberation Sans" font-size="8.7" fill="#d8d8d8" font-weight="normal" text-anchor="end" >1.35</text>
<text xml:space="preserve" x="352.0" y="146.5" font-family="Liberation Sans" font-size="8.7" fill="#d8d8d8" font-weight="normal" text-anchor="end" >I-Eye</text>
<text xml:space="preserve" x="352.0" y="179.5" font-family="Liberation Sans" font-size="8.7" fill="#d8d8d8" font-weight="normal" text-anchor="end" >270</text>
<text xml:space="preserve" x="352.0" y="189.5" font-family="Liberation Sans" font-size="8.7" fill="#d8d8d8" font-weight="normal" text-anchor="end" >m</text>
<text xml:space="preserve" x="352.0" y="199.0" font-family="Liberation Sans" font-size="8.7" fill="#d8d8d8" font-weight="normal" text-anchor="end" >/div</text>
<text xml:space="preserve" x="352.0" y="232.5" font-family="Liberation Sans" font-size="8.7" fill="#d8d8d8" font-weight="normal" text-anchor="end" >-1.35</text>
<text xml:space="preserve" x="354.4" y="252.0" font-family="Liberation Sans" font-size="8.7" fill="#d8d8d8" font-weight="normal" text-anchor="start" textLength="43.0" lengthAdjust="spacingAndGlyphs" >Start -1  sym</text>
<text xml:space="preserve" x="599.0" y="252.0" font-family="Liberation Sans" font-size="8.7" fill="#d8d8d8" font-weight="normal" text-anchor="end" textLength="40.0" lengthAdjust="spacingAndGlyphs" >Stop 1  sym</text>
<g clip-path="url(#clipEye)" fill="none"><path d="M355.0 209.0 L367.2 210.7 L379.4 211.6 L391.6 210.2 L403.8 209.2 L416.0 206.0 L428.2 202.2 L440.4 197.9 L452.6 193.0 L464.8 187.7 L477.0 181.4 L489.2 175.9 L501.4 169.0 L513.6 163.1 L525.8 156.5 L538.0 150.8 L550.2 145.7 L562.4 140.9 L574.6 137.7 L586.8 135.2 L599.0 132.5 M355.0 181.8 L367.2 175.2 L379.4 168.1 L391.6 161.4 L403.8 156.1 L416.0 150.2 L428.2 145.1 L440.4 139.8 L452.6 136.0 L464.8 132.7 L477.0 130.0 L489.2 128.5 L501.4 126.2 L513.6 125.5 L525.8 126.2 L538.0 128.2 L550.2 130.7 L562.4 136.0 L574.6 141.4 L586.8 147.5 L599.0 155.6 M355.0 128.9 L367.2 127.3 L379.4 125.4 L391.6 125.2 L403.8 125.8 L416.0 127.4 L428.2 131.1 L440.4 135.1 L452.6 140.5 L464.8 146.5 L477.0 154.5 L489.2 162.5 L501.4 171.2 L513.6 180.0 L525.8 188.4 L538.0 196.0 L550.2 201.2 L562.4 205.3 L574.6 207.7 L586.8 208.8 L599.0 207.7 M355.0 156.5 L367.2 164.7 L379.4 173.4 L391.6 181.6 L403.8 189.0 L416.0 196.4 L428.2 202.0 L440.4 206.2 L452.6 208.3 L464.8 209.4 L477.0 207.2 L489.2 202.9 L501.4 198.1 L513.6 191.3 L525.8 183.9 L538.0 176.2 L550.2 169.4 L562.4 163.3 L574.6 158.4 L586.8 157.0 L599.0 156.2 M355.0 206.7 L367.2 202.6 L379.4 197.8 L391.6 192.1 L403.8 184.7 L416.0 176.6 L428.2 168.9 L440.4 162.7 L452.6 158.6 L464.8 156.6 L477.0 155.9 L489.2 157.5 L501.4 161.5 L513.6 167.3 L525.8 173.7 L538.0 181.4 L550.2 189.3 L562.4 196.8 L574.6 202.1 L586.8 206.5 L599.0 208.1 M355.0 155.1 L367.2 157.7 L379.4 162.3 L391.6 167.5 L403.8 174.7 L416.0 182.7 L428.2 190.7 L440.4 199.0 L452.6 204.1 L464.8 206.9 L477.0 207.2 L489.2 205.9 L501.4 201.5 L513.6 194.7 L525.8 186.6 L538.0 176.5 L550.2 166.9 L562.4 157.2 L574.6 147.1 L586.8 138.0 L599.0 130.6 M355.0 208.4 L367.2 206.6 L379.4 201.9 L391.6 195.4 L403.8 188.0 L416.0 177.5 L428.2 167.1 L440.4 156.0 L452.6 145.5 L464.8 136.2 L477.0 129.5 L489.2 122.9 L501.4 118.5 L513.6 116.4 L525.8 116.6 L538.0 118.1 L550.2 120.5 L562.4 123.0 L574.6 124.7 L586.8 128.4 L599.0 129.6 M355.0 131.4 L367.2 125.7 L379.4 121.7 L391.6 119.3 L403.8 119.5 L416.0 120.4 L428.2 122.2 L440.4 124.9 L452.6 126.7 L464.8 128.6 L477.0 129.7 L489.2 131.3 L501.4 130.8 L513.6 130.5 L525.8 129.7 L538.0 128.1 L550.2 127.5 L562.4 126.5 L574.6 127.2 L586.8 128.1 L599.0 130.0 M355.0 131.1 L367.2 132.0 L379.4 132.5 L391.6 132.5 L403.8 131.3 L416.0 131.0 L428.2 129.4 L440.4 128.5 L452.6 128.8 L464.8 129.8 L477.0 131.2 L489.2 133.1 L501.4 136.4 L513.6 140.2 L525.8 145.0 L538.0 147.8 L550.2 151.1 L562.4 154.1 L574.6 155.7 L586.8 156.6 L599.0 155.9 M355.0 131.7 L367.2 134.0 L379.4 136.0 L391.6 140.5 L403.8 143.7 L416.0 148.3 L428.2 151.7 L440.4 154.6 L452.6 156.0 L464.8 157.3 L477.0 157.9 L489.2 154.9 L501.4 152.4 L513.6 149.0 L525.8 146.1 L538.0 142.5 L550.2 138.9 L562.4 135.0 L574.6 132.1 L586.8 131.1 L599.0 131.4 M355.0 155.2 L367.2 153.8 L379.4 152.3 L391.6 149.7 L403.8 146.0 L416.0 141.8 L428.2 138.1 L440.4 134.9 L452.6 132.4 L464.8 130.9 L477.0 130.2 L489.2 131.2 L501.4 133.2 L513.6 137.2 L525.8 141.6 L538.0 147.3 L550.2 153.5 L562.4 160.5 L574.6 168.5 L586.8 176.1 L599.0 183.6 M355.0 130.9 L367.2 131.4 L379.4 133.4 L391.6 136.5 L403.8 140.7 L416.0 146.6 L428.2 152.8 L440.4 159.2 L452.6 166.6 L464.8 174.1 L477.0 181.8 L489.2 188.9 L501.4 195.6 L513.6 200.6 L525.8 205.6 L538.0 210.0 L550.2 212.4 L562.4 213.0 L574.6 211.9 L586.8 209.8 L599.0 207.3 M355.0 183.4 L367.2 190.4 L379.4 195.4 L391.6 200.8 L403.8 205.2 L416.0 208.5 L428.2 211.1 L440.4 212.9 L452.6 212.1 L464.8 210.1 L477.0 207.4 L489.2 203.1 L501.4 197.8 L513.6 191.5 L525.8 184.0 L538.0 176.9 L550.2 170.3 L562.4 164.6 L574.6 160.1 L586.8 156.9 L599.0 154.8 M355.0 209.4 L367.2 205.2 L379.4 199.3 L391.6 193.0 L403.8 185.9 L416.0 179.1 L428.2 172.3 L440.4 167.4 L452.6 161.9 L464.8 158.0 L477.0 155.9 L489.2 154.7 L501.4 154.5 L513.6 156.2 L525.8 159.1 L538.0 161.3 L550.2 165.4 L562.4 169.7 L574.6 173.5 L586.8 176.9 L599.0 180.1 M355.0 154.6 L367.2 153.5 L379.4 155.1 L391.6 157.2 L403.8 160.5 L416.0 163.8 L428.2 168.3 L440.4 171.9 L452.6 175.9 L464.8 179.6 L477.0 182.0 L489.2 183.1 L501.4 184.2 L513.6 183.4 L525.8 181.8 L538.0 180.2 L550.2 176.8 L562.4 172.9 L574.6 167.3 L586.8 161.9 L599.0 156.0 M355.0 179.5 L367.2 181.2 L379.4 181.9 L391.6 181.5 L403.8 180.4 L416.0 178.4 L428.2 175.7 L440.4 172.4 L452.6 168.0 L464.8 162.8 L477.0 157.0 L489.2 150.9 L501.4 144.3 L513.6 138.4 L525.8 133.2 L538.0 128.8 L550.2 125.1 L562.4 123.5 L574.6 124.2 L586.8 126.3 L599.0 129.6 M355.0 155.9 L367.2 148.9 L379.4 142.6 L391.6 136.3 L403.8 130.6 L416.0 125.9 L428.2 122.8 L440.4 120.8 L452.6 121.9 L464.8 124.0 L477.0 127.9 L489.2 132.8 L501.4 139.5 L513.6 146.6 L525.8 153.9 L538.0 162.8 L550.2 169.5 L562.4 175.4 L574.6 178.8 L586.8 181.0 L599.0 181.3 M355.0 130.5 L367.2 135.5 L379.4 141.0 L391.6 148.3 L403.8 156.5 L416.0 164.3 L428.2 170.7 L440.4 176.9 L452.6 180.7 L464.8 183.7 L477.0 183.8 L489.2 181.8 L501.4 176.3 L513.6 169.7 L525.8 162.1 L538.0 154.1 L550.2 146.8 L562.4 139.6 L574.6 135.2 L586.8 131.5 L599.0 130.1 M355.0 180.5 L367.2 178.6 L379.4 174.2 L391.6 168.1 L403.8 161.5 L416.0 152.8 L428.2 145.3 L440.4 138.6 L452.6 133.3 L464.8 129.7 L477.0 129.3 L489.2 130.6 L501.4 134.2 L513.6 141.4 L525.8 149.5 L538.0 158.4 L550.2 169.2 L562.4 180.0 L574.6 189.9 L586.8 198.4 L599.0 207.4 M355.0 129.4 L367.2 130.6 L379.4 135.4 L391.6 142.8 L403.8 151.7 L416.0 161.2 L428.2 172.1 L440.4 182.4 L452.6 192.2 L464.8 201.0 L477.0 208.5 L489.2 214.3 L501.4 218.6 L513.6 220.3 L525.8 220.3 L538.0 218.0 L550.2 214.1 L562.4 209.6 L574.6 201.8 L586.8 192.6 L599.0 182.8 M355.0 206.9 L367.2 213.3 L379.4 217.3 L391.6 220.3 L403.8 219.6 L416.0 217.4 L428.2 213.8 L440.4 208.0 L452.6 200.6 L464.8 191.9 L477.0 182.9 L489.2 172.5 L501.4 163.6 L513.6 153.9 L525.8 145.1 L538.0 137.1 L550.2 130.9 L562.4 126.1 L574.6 124.7 L586.8 125.8 L599.0 129.1 M355.0 184.5 L367.2 174.4 L379.4 164.3 L391.6 154.9 L403.8 146.6 L416.0 139.0 L428.2 132.8 L440.4 128.0 L452.6 125.9 L464.8 127.0 L477.0 130.0 L489.2 135.7 L501.4 143.0 L513.6 152.1 L525.8 161.9 L538.0 172.5 L550.2 182.1 L562.4 191.1 L574.6 198.5 L586.8 204.1 L599.0 206.8 M355.0 129.8 L367.2 135.6 L379.4 142.9 L391.6 151.4 L403.8 161.4 L416.0 172.0 L428.2 182.3 L440.4 190.5 L452.6 197.1 L464.8 202.3 L477.0 205.4 L489.2 206.5 L501.4 204.0 L513.6 200.6 L525.8 194.3 L538.0 187.2 L550.2 179.9 L562.4 172.5 L574.6 165.2 L586.8 159.3 L599.0 155.5 M355.0 208.2 L367.2 208.8 L379.4 206.4 L391.6 201.8 L403.8 194.6 L416.0 187.4 L428.2 179.5 L440.4 171.2 L452.6 164.0 L464.8 156.9 L477.0 153.4 L489.2 151.3 L501.4 151.5 L513.6 152.0 L525.8 154.9 L538.0 159.2 L550.2 163.8 L562.4 169.0 L574.6 173.2 L586.8 177.5 L599.0 180.7 M355.0 154.9 L367.2 152.2 L379.4 152.4 L391.6 153.1 L403.8 156.1 L416.0 160.9 L428.2 164.9 L440.4 169.6 L452.6 174.7 L464.8 179.4 L477.0 181.5 L489.2 183.4 L501.4 183.9 L513.6 182.5 L525.8 180.7 L538.0 177.9 L550.2 173.4 L562.4 168.9 L574.6 164.7 L586.8 160.5 L599.0 155.6 M355.0 179.4 L367.2 181.4 L379.4 181.5 L391.6 181.3 L403.8 178.6 L416.0 175.3 L428.2 172.6 L440.4 168.8 L452.6 164.7 L464.8 159.2 L477.0 154.5 L489.2 149.9 L501.4 146.3 L513.6 143.1 L525.8 139.1 L538.0 135.5 L550.2 134.3 L562.4 132.5 L574.6 131.7 L586.8 130.1 L599.0 129.6 M355.0 156.1 L367.2 151.4 L379.4 146.9 L391.6 142.9 L403.8 138.8 L416.0 135.6 L428.2 133.6 L440.4 132.2 L452.6 130.7 L464.8 129.9 L477.0 129.5 L489.2 128.6 L501.4 128.8 L513.6 129.0 L525.8 129.4 L538.0 129.4 L550.2 129.5 L562.4 129.9 L574.6 128.9 L586.8 129.0 L599.0 127.9 M355.0 130.6 L367.2 130.7 L379.4 130.3 L391.6 130.7 L403.8 131.2 L416.0 131.6 L428.2 131.6 L440.4 131.7 L452.6 132.4 L464.8 131.8 L477.0 132.5 L489.2 132.1 L501.4 130.6 L513.6 130.2 L525.8 129.3 L538.0 128.7 L550.2 127.6 L562.4 127.4 L574.6 127.2 L586.8 127.7 L599.0 129.3 M355.0 129.5 L367.2 129.2 L379.4 127.8 L391.6 127.5 L403.8 127.0 L416.0 126.8 L428.2 127.1 L440.4 127.8 L452.6 126.6 L464.8 127.1 L477.0 129.6 L489.2 132.0 L501.4 134.5 L513.6 137.1 L525.8 140.2 L538.0 143.8 L550.2 147.6 L562.4 150.7 L574.6 152.8 L586.8 154.7 L599.0 156.2 M355.0 129.1 L367.2 130.0 L379.4 133.2 L391.6 136.4 L403.8 139.9 L416.0 144.6 L428.2 147.7 L440.4 151.1 L452.6 154.3 L464.8 156.7 L477.0 157.5 L489.2 157.4 L501.4 156.7 L513.6 154.8 L525.8 152.9 L538.0 150.0 L550.2 146.2 L562.4 142.6 L574.6 138.4 L586.8 134.1 L599.0 130.5 M355.0 153.1 L367.2 153.4 L379.4 152.9 L391.6 151.4 L403.8 150.3 L416.0 148.5 L428.2 144.8 L440.4 140.8 L452.6 137.9 L464.8 134.2 L477.0 130.6 L489.2 126.6 L501.4 123.3 L513.6 120.5 L525.8 117.8 L538.0 116.9 L550.2 116.7 L562.4 117.7 L574.6 119.8 L586.8 123.8 L599.0 128.8 M355.0 130.4 L367.2 125.6 L379.4 123.0 L391.6 121.0 L403.8 119.0 L416.0 118.6 L428.2 118.4 L440.4 119.4 L452.6 121.5 L464.8 126.4 L477.0 131.6 L489.2 136.5 L501.4 143.5 L513.6 150.9 L525.8 159.3 L538.0 167.7 L550.2 176.4 L562.4 184.3 L574.6 191.8 L586.8 199.2 L599.0 205.4 M355.0 129.4 L367.2 135.6 L379.4 142.3 L391.6 150.7 L403.8 159.8 L416.0 170.3 L428.2 179.3 L440.4 187.6 L452.6 195.4 L464.8 202.9 L477.0 209.3 L489.2 213.8 L501.4 216.7 L513.6 218.4 L525.8 219.1 L538.0 219.9 L550.2 219.3 L562.4 216.5 L574.6 214.8 L586.8 212.2 L599.0 209.3 M355.0 209.2 L367.2 213.5 L379.4 216.6 L391.6 218.4 L403.8 219.5 L416.0 218.3 L428.2 216.7 L440.4 214.1 L452.6 211.0 L464.8 208.4 L477.0 205.7 L489.2 202.6 L501.4 199.8 L513.6 197.0 L525.8 194.7 L538.0 192.6 L550.2 191.2 L562.4 189.1 L574.6 186.9 L586.8 184.8 L599.0 182.1 M355.0 207.5 L367.2 204.7 L379.4 201.8 L391.6 199.3 L403.8 195.8 L416.0 193.2 L428.2 191.9 L440.4 189.2 L452.6 186.0 L464.8 183.8 L477.0 181.6 L489.2 179.6 L501.4 178.3 L513.6 176.4 L525.8 173.5 L538.0 171.2 L550.2 168.9 L562.4 165.3 L574.6 161.4 L586.8 158.0 L599.0 153.7 M355.0 180.5 L367.2 178.2 L379.4 176.8 L391.6 175.9 L403.8 174.0 L416.0 172.6 L428.2 170.9 L440.4 168.0 L452.6 164.5 L464.8 161.2 L477.0 157.4 L489.2 150.8 L501.4 145.6 L513.6 140.8 L525.8 135.5 L538.0 131.1 L550.2 128.6 L562.4 126.0 L574.6 125.3 L586.8 127.5 L599.0 130.2 M355.0 154.4 L367.2 149.0 L379.4 143.7 L391.6 138.0 L403.8 134.2 L416.0 129.9 L428.2 127.3 L440.4 125.1 L452.6 124.3 L464.8 125.1 L477.0 128.2 L489.2 132.8 L501.4 138.3 L513.6 145.0 L525.8 152.9 L538.0 161.1 L550.2 168.9 L562.4 174.7 L574.6 179.5 L586.8 181.6 L599.0 182.0 M355.0 128.7 L367.2 134.3 L379.4 140.1 L391.6 147.4 L403.8 154.9 L416.0 162.2 L428.2 169.0 L440.4 174.6 L452.6 180.1 L464.8 181.2 L477.0 181.6 L489.2 178.8 L501.4 174.5 L513.6 169.9 L525.8 163.0 L538.0 155.4 L550.2 146.5 L562.4 140.0 L574.6 134.3 L586.8 131.6 L599.0 129.9 M355.0 179.8 L367.2 178.0 L379.4 173.1 L391.6 167.0 L403.8 160.2 L416.0 153.4 L428.2 145.7 L440.4 139.2 L452.6 133.9 L464.8 130.3 L477.0 130.1 L489.2 130.8 L501.4 134.4 L513.6 140.4 L525.8 148.1 L538.0 156.2 L550.2 164.9 L562.4 172.4 L574.6 178.5 L586.8 182.7 L599.0 184.4 M355.0 130.1 L367.2 131.2 L379.4 134.3 L391.6 139.9 L403.8 147.2 L416.0 155.2 L428.2 163.5 L440.4 170.4 L452.6 176.2 L464.8 179.7 L477.0 181.7 L489.2 182.3 L501.4 179.4 L513.6 174.3 L525.8 168.5 L538.0 162.3 L550.2 154.4 L562.4 146.8 L574.6 139.7 L586.8 134.4 L599.0 129.4 M355.0 181.7 L367.2 180.7 L379.4 178.5 L391.6 173.6 L403.8 167.8 L416.0 159.5 L428.2 151.4 L440.4 143.0 L452.6 135.2 L464.8 131.3 L477.0 127.9 L489.2 127.5 L501.4 127.8 L513.6 130.0 L525.8 134.1 L538.0 138.8 L550.2 143.4 L562.4 146.8 L574.6 150.4 L586.8 153.0 L599.0 154.2 M355.0 130.0 L367.2 127.8 L379.4 128.5 L391.6 130.1 L403.8 133.6 L416.0 136.5 L428.2 140.3 L440.4 145.3 L452.6 149.5 L464.8 152.7 L477.0 154.9 L489.2 155.4 L501.4 154.9 L513.6 154.6 L525.8 154.0 L538.0 152.9 L550.2 151.4 L562.4 151.6 L574.6 151.8 L586.8 154.1 L599.0 157.0 M355.0 155.2 L367.2 156.6 L379.4 156.4 L391.6 155.7 L403.8 153.5 L416.0 151.8 L428.2 151.9 L440.4 150.7 L452.6 150.7 L464.8 152.3 L477.0 155.5 L489.2 159.1 L501.4 164.9 L513.6 171.4 L525.8 177.4 L538.0 185.2 L550.2 192.4 L562.4 197.5 L574.6 202.4 L586.8 204.9 L599.0 206.9 M355.0 156.9 L367.2 160.5 L379.4 165.4 L391.6 171.8 L403.8 178.0 L416.0 185.4 L428.2 192.4 L440.4 197.9 L452.6 202.7 L464.8 205.5 L477.0 206.0 L489.2 206.0 L501.4 204.4 L513.6 200.8 L525.8 195.9 L538.0 190.3 L550.2 183.7 L562.4 176.9 L574.6 170.7 L586.8 163.5 L599.0 156.8 M355.0 205.4 L367.2 203.8 L379.4 203.1 L391.6 199.4 L403.8 194.5 L416.0 188.6 L428.2 182.0 L440.4 174.1 L452.6 167.1 L464.8 160.8 L477.0 153.9 L489.2 148.5 L501.4 144.3 L513.6 140.2 L525.8 137.0 L538.0 134.8 L550.2 133.3 L562.4 131.5 L574.6 129.9 L586.8 128.9 L599.0 128.5 M355.0 154.5 L367.2 148.7 L379.4 143.2 L391.6 138.7 L403.8 135.5 L416.0 133.5 L428.2 131.1 L440.4 130.4 L452.6 129.8 L464.8 129.4 L477.0 129.1 L489.2 128.7 L501.4 128.2 L513.6 129.1 L525.8 128.5 L538.0 128.1 L550.2 129.1 L562.4 128.9 L574.6 130.1 L586.8 130.4 L599.0 130.8 M355.0 128.4 L367.2 127.4 L379.4 127.8 L391.6 127.6 L403.8 128.0 L416.0 128.1 L428.2 126.8 L440.4 126.8 L452.6 127.9 L464.8 128.9 L477.0 129.3 L489.2 130.0 L501.4 131.1 L513.6 132.2 L525.8 134.0 L538.0 135.4 L550.2 135.8 L562.4 135.0 L574.6 134.5 L586.8 133.0 L599.0 130.2 M355.0 128.4 L367.2 129.4 L379.4 132.1 L391.6 133.5 L403.8 134.5 L416.0 135.7 L428.2 136.8 L440.4 136.3 L452.6 135.5 L464.8 133.7 L477.0 131.1 L489.2 127.9 L501.4 125.2 L513.6 122.0 L525.8 118.0 L538.0 116.2 L550.2 115.6 L562.4 116.0 L574.6 118.4 L586.8 123.3 L599.0 129.3 M355.0 132.5 L367.2 128.7 L379.4 125.1 L391.6 121.8 L403.8 118.6 L416.0 115.7 L428.2 114.4 L440.4 115.6 L452.6 117.9 L464.8 122.9 L477.0 129.5 L489.2 137.3 L501.4 147.5 L513.6 159.1 L525.8 170.0 L538.0 180.8 L550.2 190.5 L562.4 198.7 L574.6 204.9 L586.8 208.5 L599.0 207.4 M355.0 128.2 L367.2 136.3 L379.4 145.7 L391.6 157.1 L403.8 168.6 L416.0 179.6 L428.2 190.3 L440.4 199.3 L452.6 205.3 L464.8 208.6 L477.0 209.1 L489.2 205.7 L501.4 200.0 L513.6 191.7 L525.8 182.4 L538.0 171.1 L550.2 160.4 L562.4 150.0 L574.6 141.2 L586.8 134.7 L599.0 130.7 M355.0 207.6 L367.2 205.7 L379.4 199.7 L391.6 192.4 L403.8 183.1 L416.0 172.1 L428.2 162.4 L440.4 151.4 L452.6 142.5 L464.8 135.6 L477.0 131.4 L489.2 130.3 L501.4 131.9 L513.6 136.2 L525.8 141.3 L538.0 148.6 L550.2 155.9 L562.4 164.3 L574.6 172.0 L586.8 178.3 L599.0 182.3 M355.0 128.4 L367.2 127.0 L379.4 127.6 L391.6 131.1 L403.8 136.6 L416.0 144.3 L428.2 152.5 L440.4 161.5 L452.6 169.3 L464.8 175.8 L477.0 181.6 L489.2 184.0 L501.4 185.2 L513.6 184.0 L525.8 182.1 L538.0 177.8 L550.2 172.6 L562.4 168.2 L574.6 162.9 L586.8 160.1 L599.0 157.0 M355.0 181.1 L367.2 184.5 L379.4 184.9 L391.6 184.1 L403.8 181.6 L416.0 177.4 L428.2 171.6 L440.4 166.6 L452.6 163.4 L464.8 158.6 L477.0 154.9 L489.2 152.8 L501.4 151.7 L513.6 153.5 L525.8 156.6 L538.0 160.1 L550.2 164.0 L562.4 168.4 L574.6 173.6 L586.8 177.5 L599.0 182.0 M355.0 154.6 L367.2 152.8 L379.4 153.2 L391.6 154.8 L403.8 156.8 L416.0 160.5 L428.2 164.9 L440.4 169.1 L452.6 172.8 L464.8 177.4 L477.0 182.1 L489.2 185.2 L501.4 187.9 L513.6 190.2 L525.8 192.4 L538.0 194.8 L550.2 197.8 L562.4 199.9 L574.6 202.0 L586.8 205.5 L599.0 208.0 M355.0 183.7 L367.2 187.7 L379.4 190.8 L391.6 192.8 L403.8 194.8 L416.0 197.5 L428.2 199.1 L440.4 200.7 L452.6 203.2 L464.8 205.1 L477.0 206.8 L489.2 209.9 L501.4 212.0 L513.6 214.0 L525.8 216.2 L538.0 217.3 L550.2 217.7 L562.4 216.2 L574.6 214.6 L586.8 211.1 L599.0 206.0 M355.0 207.5 L367.2 209.8 L379.4 213.1 L391.6 214.7 L403.8 217.8 L416.0 219.6 L428.2 219.8 L440.4 218.8 L452.6 216.7 L464.8 213.8 L477.0 208.6 L489.2 203.1 L501.4 195.8 L513.6 188.4 L525.8 180.3 L538.0 171.2 L550.2 162.8 L562.4 153.5 L574.6 145.0 L586.8 136.9 L599.0 129.3 M355.0 205.9 L367.2 199.5 L379.4 192.9 L391.6 185.2 L403.8 177.1 L416.0 167.9 L428.2 159.7 L440.4 150.6 L452.6 142.6 L464.8 134.7 L477.0 128.1 L489.2 122.7 L501.4 117.5 L513.6 114.8 L525.8 113.3 L538.0 113.8 L550.2 114.8 L562.4 116.5 L574.6 119.6 L586.8 123.4 L599.0 129.6 M355.0 129.0 L367.2 124.4 L379.4 120.4 L391.6 116.8 L403.8 115.4 L416.0 115.6 L428.2 115.5 L440.4 117.5 L452.6 120.3 L464.8 123.1 L477.0 128.6 L489.2 134.1 L501.4 140.1 L513.6 145.9 L525.8 152.8 L538.0 159.0 L550.2 164.6 L562.4 170.2 L574.6 174.5 L586.8 178.5 L599.0 181.1 M355.0 128.7 L367.2 134.2 L379.4 139.4 L391.6 145.4 L403.8 151.6 L416.0 157.3 L428.2 163.7 L440.4 168.7 L452.6 173.3 L464.8 176.1 L477.0 180.2 L489.2 182.0 L501.4 183.6 L513.6 183.5 L525.8 183.7 L538.0 183.8 L550.2 182.7 L562.4 182.1 L574.6 181.4 L586.8 181.3 L599.0 181.2 M355.0 182.3 L367.2 184.4 L379.4 185.6 L391.6 185.7 L403.8 185.8 L416.0 185.1 L428.2 185.0 L440.4 184.4 L452.6 182.8 L464.8 182.3 L477.0 181.7 L489.2 182.3 L501.4 183.4 L513.6 184.5 L525.8 186.0 L538.0 189.0 L550.2 191.8 L562.4 194.8 L574.6 199.3 L586.8 203.6 L599.0 206.5 M355.0 184.3 L367.2 183.9 L379.4 184.5 L391.6 185.7 L403.8 187.3 L416.0 189.0 L428.2 192.3 L440.4 195.4 L452.6 199.2 L464.8 202.9 L477.0 206.5 L489.2 210.8 L501.4 214.5 L513.6 217.5 L525.8 219.3 L538.0 219.7 L550.2 218.8 L562.4 218.4 L574.6 216.0 L586.8 212.0 L599.0 206.4 M355.0 208.4 L367.2 213.2 L379.4 216.9 L391.6 219.3 L403.8 220.9 L416.0 222.2 L428.2 221.9 L440.4 220.8 L452.6 218.2 L464.8 214.0 L477.0 209.2 L489.2 202.2 L501.4 194.4 L513.6 185.8 L525.8 176.5 L538.0 167.2 L550.2 157.3 L562.4 148.6 L574.6 140.3 L586.8 134.5 L599.0 130.0 M355.0 207.0 L367.2 200.6 L379.4 192.4 L391.6 184.8 L403.8 176.1 L416.0 166.6 L428.2 157.9 L440.4 150.4 L452.6 141.9 L464.8 135.7 L477.0 131.3 L489.2 126.5 L501.4 124.0 L513.6 124.2 L525.8 125.2 L538.0 127.4 L550.2 132.0 L562.4 136.9 L574.6 142.8 L586.8 150.1 L599.0 156.0 M355.0 128.0 L367.2 125.3 L379.4 123.7 L391.6 123.4 L403.8 124.7 L416.0 127.7 L428.2 132.5 L440.4 137.2 L452.6 143.2 L464.8 149.4 L477.0 155.9 L489.2 163.4 L501.4 170.4 L513.6 176.4 L525.8 182.6 L538.0 188.4 L550.2 193.8 L562.4 197.2 L574.6 202.0 L586.8 204.5 L599.0 207.6 M355.0 154.0 L367.2 160.4 L379.4 167.1 L391.6 174.6 L403.8 179.3 L416.0 185.1 L428.2 191.4 L440.4 196.3 L452.6 201.3 L464.8 204.1 L477.0 207.8 L489.2 210.2 L501.4 213.1 L513.6 214.0 L525.8 214.4 L538.0 214.5 L550.2 214.1 L562.4 214.0 L574.6 212.1 L586.8 209.5 L599.0 206.7 M355.0 207.2 L367.2 209.4 L379.4 211.8 L391.6 214.2 L403.8 215.3 L416.0 216.1 L428.2 215.6 L440.4 214.8 L452.6 213.5 L464.8 210.6 L477.0 207.3 L489.2 204.1 L501.4 199.4 L513.6 194.0 L525.8 188.3 L538.0 181.5 L550.2 175.6 L562.4 170.3 L574.6 165.3 L586.8 159.2 L599.0 154.6 M355.0 207.4 L367.2 203.1 L379.4 199.0 L391.6 192.9 L403.8 187.8 L416.0 182.2 L428.2 176.4 L440.4 170.1 L452.6 164.2 L464.8 158.5 L477.0 154.0 L489.2 150.3 L501.4 146.3 L513.6 143.1 L525.8 141.7 L538.0 139.3 L550.2 137.6 L562.4 136.2 L574.6 134.5 L586.8 133.0 L599.0 130.5 M355.0 156.3 L367.2 152.9 L379.4 149.1 L391.6 147.0 L403.8 145.4 L416.0 143.3 L428.2 141.3 L440.4 138.9 L452.6 135.4 L464.8 132.4 L477.0 129.7 L489.2 127.2 L501.4 124.1 L513.6 121.7 L525.8 118.6 L538.0 117.3 L550.2 117.4 L562.4 118.8 L574.6 121.2 L586.8 124.3 L599.0 130.1 M355.0 130.2 L367.2 127.2 L379.4 124.1 L391.6 120.7 L403.8 118.2 L416.0 116.1 L428.2 115.1 L440.4 116.4 L452.6 119.2 L464.8 123.8 L477.0 130.1 L489.2 137.8 L501.4 146.7 L513.6 156.6 L525.8 166.7 L538.0 176.7 L550.2 186.9 L562.4 194.2 L574.6 201.5 L586.8 205.3 L599.0 205.9 M355.0 130.2 L367.2 139.1 L379.4 147.7 L391.6 157.7 L403.8 168.1 L416.0 178.5 L428.2 187.8 L440.4 196.2 L452.6 203.0 L464.8 206.8 L477.0 208.0 L489.2 206.5 L501.4 203.0 L513.6 197.9 L525.8 192.2 L538.0 183.7 L550.2 175.9 L562.4 167.7 L574.6 161.3 L586.8 157.4 L599.0 154.5 M355.0 207.7 L367.2 208.2 L379.4 205.1 L391.6 199.8 L403.8 192.3 L416.0 184.2 L428.2 176.0 L440.4 168.8 L452.6 162.2 L464.8 156.7 L477.0 154.0 L489.2 154.4 L501.4 156.7 L513.6 160.7 L525.8 167.0 L538.0 173.4 L550.2 180.9 L562.4 188.4 L574.6 195.5 L586.8 202.0 L599.0 207.7 M355.0 155.8 L367.2 154.9 L379.4 156.6 L391.6 160.7 L403.8 166.1 L416.0 173.2 L428.2 180.5 L440.4 187.6 L452.6 194.5 L464.8 201.6 L477.0 206.8 L489.2 211.2 L501.4 214.0 L513.6 215.7 L525.8 215.8 L538.0 215.8 L550.2 215.0 L562.4 212.8 L574.6 211.1 L586.8 209.1 L599.0 208.4 M355.0 207.8 L367.2 212.5 L379.4 214.9 L391.6 216.9 L403.8 217.1 L416.0 216.5 L428.2 214.5 L440.4 212.7 L452.6 210.6 L464.8 208.7 L477.0 207.0 L489.2 205.5 L501.4 205.6 L513.6 206.0 L525.8 207.3 L538.0 207.3 L550.2 208.2 L562.4 208.7 L574.6 208.4 L586.8 207.8 L599.0 206.4 M355.0 207.0 L367.2 207.2 L379.4 207.6 L391.6 208.5 L403.8 209.2 L416.0 210.0 L428.2 209.8 L440.4 210.0 L452.6 209.1 L464.8 208.2 L477.0 206.7 L489.2 204.6 L501.4 203.3 L513.6 200.0 L525.8 197.1 L538.0 193.8 L550.2 191.3 L562.4 188.5 L574.6 185.7 L586.8 183.2 L599.0 180.0 M355.0 207.3 L367.2 205.2 L379.4 202.2 L391.6 199.6 L403.8 197.0 L416.0 193.5 L428.2 189.7 L440.4 186.9 L452.6 184.3 L464.8 182.6 L477.0 181.0 L489.2 180.8 L501.4 180.5 L513.6 181.5 L525.8 182.9 L538.0 183.2 L550.2 184.2 L562.4 184.1 L574.6 184.1 L586.8 183.8 L599.0 182.9" stroke="#1a5ec8" stroke-width="1.1"/><path d="M355.0 209.0 L367.2 210.7 L379.4 211.6 L391.6 210.2 L403.8 209.2 L416.0 206.0 L428.2 202.2 L440.4 197.9 L452.6 193.0 L464.8 187.7 L477.0 181.4 L489.2 175.9 L501.4 169.0 L513.6 163.1 L525.8 156.5 L538.0 150.8 L550.2 145.7 L562.4 140.9 L574.6 137.7 L586.8 135.2 L599.0 132.5 M355.0 181.8 L367.2 175.2 L379.4 168.1 L391.6 161.4 L403.8 156.1 L416.0 150.2 L428.2 145.1 L440.4 139.8 L452.6 136.0 L464.8 132.7 L477.0 130.0 L489.2 128.5 L501.4 126.2 L513.6 125.5 L525.8 126.2 L538.0 128.2 L550.2 130.7 L562.4 136.0 L574.6 141.4 L586.8 147.5 L599.0 155.6 M355.0 128.9 L367.2 127.3 L379.4 125.4 L391.6 125.2 L403.8 125.8 L416.0 127.4 L428.2 131.1 L440.4 135.1 L452.6 140.5 L464.8 146.5 L477.0 154.5 L489.2 162.5 L501.4 171.2 L513.6 180.0 L525.8 188.4 L538.0 196.0 L550.2 201.2 L562.4 205.3 L574.6 207.7 L586.8 208.8 L599.0 207.7 M355.0 156.5 L367.2 164.7 L379.4 173.4 L391.6 181.6 L403.8 189.0 L416.0 196.4 L428.2 202.0 L440.4 206.2 L452.6 208.3 L464.8 209.4 L477.0 207.2 L489.2 202.9 L501.4 198.1 L513.6 191.3 L525.8 183.9 L538.0 176.2 L550.2 169.4 L562.4 163.3 L574.6 158.4 L586.8 157.0 L599.0 156.2 M355.0 206.7 L367.2 202.6 L379.4 197.8 L391.6 192.1 L403.8 184.7 L416.0 176.6 L428.2 168.9 L440.4 162.7 L452.6 158.6 L464.8 156.6 L477.0 155.9 L489.2 157.5 L501.4 161.5 L513.6 167.3 L525.8 173.7 L538.0 181.4 L550.2 189.3 L562.4 196.8 L574.6 202.1 L586.8 206.5 L599.0 208.1 M355.0 155.1 L367.2 157.7 L379.4 162.3 L391.6 167.5 L403.8 174.7 L416.0 182.7 L428.2 190.7 L440.4 199.0 L452.6 204.1 L464.8 206.9 L477.0 207.2 L489.2 205.9 L501.4 201.5 L513.6 194.7 L525.8 186.6 L538.0 176.5 L550.2 166.9 L562.4 157.2 L574.6 147.1 L586.8 138.0 L599.0 130.6 M355.0 208.4 L367.2 206.6 L379.4 201.9 L391.6 195.4 L403.8 188.0 L416.0 177.5 L428.2 167.1 L440.4 156.0 L452.6 145.5 L464.8 136.2 L477.0 129.5 L489.2 122.9 L501.4 118.5 L513.6 116.4 L525.8 116.6 L538.0 118.1 L550.2 120.5 L562.4 123.0 L574.6 124.7 L586.8 128.4 L599.0 129.6 M355.0 131.4 L367.2 125.7 L379.4 121.7 L391.6 119.3 L403.8 119.5 L416.0 120.4 L428.2 122.2 L440.4 124.9 L452.6 126.7 L464.8 128.6 L477.0 129.7 L489.2 131.3 L501.4 130.8 L513.6 130.5 L525.8 129.7 L538.0 128.1 L550.2 127.5 L562.4 126.5 L574.6 127.2 L586.8 128.1 L599.0 130.0 M355.0 131.1 L367.2 132.0 L379.4 132.5 L391.6 132.5 L403.8 131.3 L416.0 131.0 L428.2 129.4 L440.4 128.5 L452.6 128.8 L464.8 129.8 L477.0 131.2 L489.2 133.1 L501.4 136.4 L513.6 140.2 L525.8 145.0 L538.0 147.8 L550.2 151.1 L562.4 154.1 L574.6 155.7 L586.8 156.6 L599.0 155.9 M355.0 131.7 L367.2 134.0 L379.4 136.0 L391.6 140.5 L403.8 143.7 L416.0 148.3 L428.2 151.7 L440.4 154.6 L452.6 156.0 L464.8 157.3 L477.0 157.9 L489.2 154.9 L501.4 152.4 L513.6 149.0 L525.8 146.1 L538.0 142.5 L550.2 138.9 L562.4 135.0 L574.6 132.1 L586.8 131.1 L599.0 131.4 M355.0 155.2 L367.2 153.8 L379.4 152.3 L391.6 149.7 L403.8 146.0 L416.0 141.8 L428.2 138.1 L440.4 134.9 L452.6 132.4 L464.8 130.9 L477.0 130.2 L489.2 131.2 L501.4 133.2 L513.6 137.2 L525.8 141.6 L538.0 147.3 L550.2 153.5 L562.4 160.5 L574.6 168.5 L586.8 176.1 L599.0 183.6 M355.0 130.9 L367.2 131.4 L379.4 133.4 L391.6 136.5 L403.8 140.7 L416.0 146.6 L428.2 152.8 L440.4 159.2 L452.6 166.6 L464.8 174.1 L477.0 181.8 L489.2 188.9 L501.4 195.6 L513.6 200.6 L525.8 205.6 L538.0 210.0 L550.2 212.4 L562.4 213.0 L574.6 211.9 L586.8 209.8 L599.0 207.3 M355.0 183.4 L367.2 190.4 L379.4 195.4 L391.6 200.8 L403.8 205.2 L416.0 208.5 L428.2 211.1 L440.4 212.9 L452.6 212.1 L464.8 210.1 L477.0 207.4 L489.2 203.1 L501.4 197.8 L513.6 191.5 L525.8 184.0 L538.0 176.9 L550.2 170.3 L562.4 164.6 L574.6 160.1 L586.8 156.9 L599.0 154.8 M355.0 209.4 L367.2 205.2 L379.4 199.3 L391.6 193.0 L403.8 185.9 L416.0 179.1 L428.2 172.3 L440.4 167.4 L452.6 161.9 L464.8 158.0 L477.0 155.9 L489.2 154.7 L501.4 154.5 L513.6 156.2 L525.8 159.1 L538.0 161.3 L550.2 165.4 L562.4 169.7 L574.6 173.5 L586.8 176.9 L599.0 180.1 M355.0 154.6 L367.2 153.5 L379.4 155.1 L391.6 157.2 L403.8 160.5 L416.0 163.8 L428.2 168.3 L440.4 171.9 L452.6 175.9 L464.8 179.6 L477.0 182.0 L489.2 183.1 L501.4 184.2 L513.6 183.4 L525.8 181.8 L538.0 180.2 L550.2 176.8 L562.4 172.9 L574.6 167.3 L586.8 161.9 L599.0 156.0 M355.0 179.5 L367.2 181.2 L379.4 181.9 L391.6 181.5 L403.8 180.4 L416.0 178.4 L428.2 175.7 L440.4 172.4 L452.6 168.0 L464.8 162.8 L477.0 157.0 L489.2 150.9 L501.4 144.3 L513.6 138.4 L525.8 133.2 L538.0 128.8 L550.2 125.1 L562.4 123.5 L574.6 124.2 L586.8 126.3 L599.0 129.6 M355.0 155.9 L367.2 148.9 L379.4 142.6 L391.6 136.3 L403.8 130.6 L416.0 125.9 L428.2 122.8 L440.4 120.8 L452.6 121.9 L464.8 124.0 L477.0 127.9 L489.2 132.8 L501.4 139.5 L513.6 146.6 L525.8 153.9 L538.0 162.8 L550.2 169.5 L562.4 175.4 L574.6 178.8 L586.8 181.0 L599.0 181.3 M355.0 130.5 L367.2 135.5 L379.4 141.0 L391.6 148.3 L403.8 156.5 L416.0 164.3 L428.2 170.7 L440.4 176.9 L452.6 180.7 L464.8 183.7 L477.0 183.8 L489.2 181.8 L501.4 176.3 L513.6 169.7 L525.8 162.1 L538.0 154.1 L550.2 146.8 L562.4 139.6 L574.6 135.2 L586.8 131.5 L599.0 130.1 M355.0 180.5 L367.2 178.6 L379.4 174.2 L391.6 168.1 L403.8 161.5 L416.0 152.8 L428.2 145.3 L440.4 138.6 L452.6 133.3 L464.8 129.7 L477.0 129.3 L489.2 130.6 L501.4 134.2 L513.6 141.4 L525.8 149.5 L538.0 158.4 L550.2 169.2 L562.4 180.0 L574.6 189.9 L586.8 198.4 L599.0 207.4 M355.0 129.4 L367.2 130.6 L379.4 135.4 L391.6 142.8 L403.8 151.7 L416.0 161.2 L428.2 172.1 L440.4 182.4 L452.6 192.2 L464.8 201.0 L477.0 208.5 L489.2 214.3 L501.4 218.6 L513.6 220.3 L525.8 220.3 L538.0 218.0 L550.2 214.1 L562.4 209.6 L574.6 201.8 L586.8 192.6 L599.0 182.8 M355.0 206.9 L367.2 213.3 L379.4 217.3 L391.6 220.3 L403.8 219.6 L416.0 217.4 L428.2 213.8 L440.4 208.0 L452.6 200.6 L464.8 191.9 L477.0 182.9 L489.2 172.5 L501.4 163.6 L513.6 153.9 L525.8 145.1 L538.0 137.1 L550.2 130.9 L562.4 126.1 L574.6 124.7 L586.8 125.8 L599.0 129.1 M355.0 184.5 L367.2 174.4 L379.4 164.3 L391.6 154.9 L403.8 146.6 L416.0 139.0 L428.2 132.8 L440.4 128.0 L452.6 125.9 L464.8 127.0 L477.0 130.0 L489.2 135.7 L501.4 143.0 L513.6 152.1 L525.8 161.9 L538.0 172.5 L550.2 182.1 L562.4 191.1 L574.6 198.5 L586.8 204.1 L599.0 206.8 M355.0 129.8 L367.2 135.6 L379.4 142.9 L391.6 151.4 L403.8 161.4 L416.0 172.0 L428.2 182.3 L440.4 190.5 L452.6 197.1 L464.8 202.3 L477.0 205.4 L489.2 206.5 L501.4 204.0 L513.6 200.6 L525.8 194.3 L538.0 187.2 L550.2 179.9 L562.4 172.5 L574.6 165.2 L586.8 159.3 L599.0 155.5 M355.0 208.2 L367.2 208.8 L379.4 206.4 L391.6 201.8 L403.8 194.6 L416.0 187.4 L428.2 179.5 L440.4 171.2 L452.6 164.0 L464.8 156.9 L477.0 153.4 L489.2 151.3 L501.4 151.5 L513.6 152.0 L525.8 154.9 L538.0 159.2 L550.2 163.8 L562.4 169.0 L574.6 173.2 L586.8 177.5 L599.0 180.7 M355.0 154.9 L367.2 152.2 L379.4 152.4 L391.6 153.1 L403.8 156.1 L416.0 160.9 L428.2 164.9 L440.4 169.6 L452.6 174.7 L464.8 179.4 L477.0 181.5 L489.2 183.4 L501.4 183.9 L513.6 182.5 L525.8 180.7 L538.0 177.9 L550.2 173.4 L562.4 168.9 L574.6 164.7 L586.8 160.5 L599.0 155.6 M355.0 179.4 L367.2 181.4 L379.4 181.5 L391.6 181.3 L403.8 178.6 L416.0 175.3 L428.2 172.6 L440.4 168.8 L452.6 164.7 L464.8 159.2 L477.0 154.5 L489.2 149.9 L501.4 146.3 L513.6 143.1 L525.8 139.1 L538.0 135.5 L550.2 134.3 L562.4 132.5 L574.6 131.7 L586.8 130.1 L599.0 129.6 M355.0 156.1 L367.2 151.4 L379.4 146.9 L391.6 142.9 L403.8 138.8 L416.0 135.6 L428.2 133.6 L440.4 132.2 L452.6 130.7 L464.8 129.9 L477.0 129.5 L489.2 128.6 L501.4 128.8 L513.6 129.0 L525.8 129.4 L538.0 129.4 L550.2 129.5 L562.4 129.9 L574.6 128.9 L586.8 129.0 L599.0 127.9 M355.0 130.6 L367.2 130.7 L379.4 130.3 L391.6 130.7 L403.8 131.2 L416.0 131.6 L428.2 131.6 L440.4 131.7 L452.6 132.4 L464.8 131.8 L477.0 132.5 L489.2 132.1 L501.4 130.6 L513.6 130.2 L525.8 129.3 L538.0 128.7 L550.2 127.6 L562.4 127.4 L574.6 127.2 L586.8 127.7 L599.0 129.3 M355.0 129.5 L367.2 129.2 L379.4 127.8 L391.6 127.5 L403.8 127.0 L416.0 126.8 L428.2 127.1 L440.4 127.8 L452.6 126.6 L464.8 127.1 L477.0 129.6 L489.2 132.0 L501.4 134.5 L513.6 137.1 L525.8 140.2 L538.0 143.8 L550.2 147.6 L562.4 150.7 L574.6 152.8 L586.8 154.7 L599.0 156.2 M355.0 129.1 L367.2 130.0 L379.4 133.2 L391.6 136.4 L403.8 139.9 L416.0 144.6 L428.2 147.7 L440.4 151.1 L452.6 154.3 L464.8 156.7 L477.0 157.5 L489.2 157.4 L501.4 156.7 L513.6 154.8 L525.8 152.9 L538.0 150.0 L550.2 146.2 L562.4 142.6 L574.6 138.4 L586.8 134.1 L599.0 130.5 M355.0 153.1 L367.2 153.4 L379.4 152.9 L391.6 151.4 L403.8 150.3 L416.0 148.5 L428.2 144.8 L440.4 140.8 L452.6 137.9 L464.8 134.2 L477.0 130.6 L489.2 126.6 L501.4 123.3 L513.6 120.5 L525.8 117.8 L538.0 116.9 L550.2 116.7 L562.4 117.7 L574.6 119.8 L586.8 123.8 L599.0 128.8 M355.0 130.4 L367.2 125.6 L379.4 123.0 L391.6 121.0 L403.8 119.0 L416.0 118.6 L428.2 118.4 L440.4 119.4 L452.6 121.5 L464.8 126.4 L477.0 131.6 L489.2 136.5 L501.4 143.5 L513.6 150.9 L525.8 159.3 L538.0 167.7 L550.2 176.4 L562.4 184.3 L574.6 191.8 L586.8 199.2 L599.0 205.4 M355.0 129.4 L367.2 135.6 L379.4 142.3 L391.6 150.7 L403.8 159.8 L416.0 170.3 L428.2 179.3 L440.4 187.6 L452.6 195.4 L464.8 202.9 L477.0 209.3 L489.2 213.8 L501.4 216.7 L513.6 218.4 L525.8 219.1 L538.0 219.9 L550.2 219.3 L562.4 216.5 L574.6 214.8 L586.8 212.2 L599.0 209.3 M355.0 209.2 L367.2 213.5 L379.4 216.6 L391.6 218.4 L403.8 219.5 L416.0 218.3 L428.2 216.7 L440.4 214.1 L452.6 211.0 L464.8 208.4 L477.0 205.7 L489.2 202.6 L501.4 199.8 L513.6 197.0 L525.8 194.7 L538.0 192.6 L550.2 191.2 L562.4 189.1 L574.6 186.9 L586.8 184.8 L599.0 182.1 M355.0 207.5 L367.2 204.7 L379.4 201.8 L391.6 199.3 L403.8 195.8 L416.0 193.2 L428.2 191.9 L440.4 189.2 L452.6 186.0 L464.8 183.8 L477.0 181.6 L489.2 179.6 L501.4 178.3 L513.6 176.4 L525.8 173.5 L538.0 171.2 L550.2 168.9 L562.4 165.3 L574.6 161.4 L586.8 158.0 L599.0 153.7 M355.0 180.5 L367.2 178.2 L379.4 176.8 L391.6 175.9 L403.8 174.0 L416.0 172.6 L428.2 170.9 L440.4 168.0 L452.6 164.5 L464.8 161.2 L477.0 157.4 L489.2 150.8 L501.4 145.6 L513.6 140.8 L525.8 135.5 L538.0 131.1 L550.2 128.6 L562.4 126.0 L574.6 125.3 L586.8 127.5 L599.0 130.2 M355.0 154.4 L367.2 149.0 L379.4 143.7 L391.6 138.0 L403.8 134.2 L416.0 129.9 L428.2 127.3 L440.4 125.1 L452.6 124.3 L464.8 125.1 L477.0 128.2 L489.2 132.8 L501.4 138.3 L513.6 145.0 L525.8 152.9 L538.0 161.1 L550.2 168.9 L562.4 174.7 L574.6 179.5 L586.8 181.6 L599.0 182.0 M355.0 128.7 L367.2 134.3 L379.4 140.1 L391.6 147.4 L403.8 154.9 L416.0 162.2 L428.2 169.0 L440.4 174.6 L452.6 180.1 L464.8 181.2 L477.0 181.6 L489.2 178.8 L501.4 174.5 L513.6 169.9 L525.8 163.0 L538.0 155.4 L550.2 146.5 L562.4 140.0 L574.6 134.3 L586.8 131.6 L599.0 129.9 M355.0 179.8 L367.2 178.0 L379.4 173.1 L391.6 167.0 L403.8 160.2 L416.0 153.4 L428.2 145.7 L440.4 139.2 L452.6 133.9 L464.8 130.3 L477.0 130.1 L489.2 130.8 L501.4 134.4 L513.6 140.4 L525.8 148.1 L538.0 156.2 L550.2 164.9 L562.4 172.4 L574.6 178.5 L586.8 182.7 L599.0 184.4 M355.0 130.1 L367.2 131.2 L379.4 134.3 L391.6 139.9 L403.8 147.2 L416.0 155.2 L428.2 163.5 L440.4 170.4 L452.6 176.2 L464.8 179.7 L477.0 181.7 L489.2 182.3 L501.4 179.4 L513.6 174.3 L525.8 168.5 L538.0 162.3 L550.2 154.4 L562.4 146.8 L574.6 139.7 L586.8 134.4 L599.0 129.4 M355.0 181.7 L367.2 180.7 L379.4 178.5 L391.6 173.6 L403.8 167.8 L416.0 159.5 L428.2 151.4 L440.4 143.0 L452.6 135.2 L464.8 131.3 L477.0 127.9 L489.2 127.5 L501.4 127.8 L513.6 130.0 L525.8 134.1 L538.0 138.8 L550.2 143.4 L562.4 146.8 L574.6 150.4 L586.8 153.0 L599.0 154.2 M355.0 130.0 L367.2 127.8 L379.4 128.5 L391.6 130.1 L403.8 133.6 L416.0 136.5 L428.2 140.3 L440.4 145.3 L452.6 149.5 L464.8 152.7 L477.0 154.9 L489.2 155.4 L501.4 154.9 L513.6 154.6 L525.8 154.0 L538.0 152.9 L550.2 151.4 L562.4 151.6 L574.6 151.8 L586.8 154.1 L599.0 157.0 M355.0 155.2 L367.2 156.6 L379.4 156.4 L391.6 155.7 L403.8 153.5 L416.0 151.8 L428.2 151.9 L440.4 150.7 L452.6 150.7 L464.8 152.3 L477.0 155.5 L489.2 159.1 L501.4 164.9 L513.6 171.4 L525.8 177.4 L538.0 185.2 L550.2 192.4 L562.4 197.5 L574.6 202.4 L586.8 204.9 L599.0 206.9 M355.0 156.9 L367.2 160.5 L379.4 165.4 L391.6 171.8 L403.8 178.0 L416.0 185.4 L428.2 192.4 L440.4 197.9 L452.6 202.7 L464.8 205.5 L477.0 206.0 L489.2 206.0 L501.4 204.4 L513.6 200.8 L525.8 195.9 L538.0 190.3 L550.2 183.7 L562.4 176.9 L574.6 170.7 L586.8 163.5 L599.0 156.8 M355.0 205.4 L367.2 203.8 L379.4 203.1 L391.6 199.4 L403.8 194.5 L416.0 188.6 L428.2 182.0 L440.4 174.1 L452.6 167.1 L464.8 160.8 L477.0 153.9 L489.2 148.5 L501.4 144.3 L513.6 140.2 L525.8 137.0 L538.0 134.8 L550.2 133.3 L562.4 131.5 L574.6 129.9 L586.8 128.9 L599.0 128.5 M355.0 154.5 L367.2 148.7 L379.4 143.2 L391.6 138.7 L403.8 135.5 L416.0 133.5 L428.2 131.1 L440.4 130.4 L452.6 129.8 L464.8 129.4 L477.0 129.1 L489.2 128.7 L501.4 128.2 L513.6 129.1 L525.8 128.5 L538.0 128.1 L550.2 129.1 L562.4 128.9 L574.6 130.1 L586.8 130.4 L599.0 130.8 M355.0 128.4 L367.2 127.4 L379.4 127.8 L391.6 127.6 L403.8 128.0 L416.0 128.1 L428.2 126.8 L440.4 126.8 L452.6 127.9 L464.8 128.9 L477.0 129.3 L489.2 130.0 L501.4 131.1 L513.6 132.2 L525.8 134.0 L538.0 135.4 L550.2 135.8 L562.4 135.0 L574.6 134.5 L586.8 133.0 L599.0 130.2 M355.0 128.4 L367.2 129.4 L379.4 132.1 L391.6 133.5 L403.8 134.5 L416.0 135.7 L428.2 136.8 L440.4 136.3 L452.6 135.5 L464.8 133.7 L477.0 131.1 L489.2 127.9 L501.4 125.2 L513.6 122.0 L525.8 118.0 L538.0 116.2 L550.2 115.6 L562.4 116.0 L574.6 118.4 L586.8 123.3 L599.0 129.3 M355.0 132.5 L367.2 128.7 L379.4 125.1 L391.6 121.8 L403.8 118.6 L416.0 115.7 L428.2 114.4 L440.4 115.6 L452.6 117.9 L464.8 122.9 L477.0 129.5 L489.2 137.3 L501.4 147.5 L513.6 159.1 L525.8 170.0 L538.0 180.8 L550.2 190.5 L562.4 198.7 L574.6 204.9 L586.8 208.5 L599.0 207.4 M355.0 128.2 L367.2 136.3 L379.4 145.7 L391.6 157.1 L403.8 168.6 L416.0 179.6 L428.2 190.3 L440.4 199.3 L452.6 205.3 L464.8 208.6 L477.0 209.1 L489.2 205.7 L501.4 200.0 L513.6 191.7 L525.8 182.4 L538.0 171.1 L550.2 160.4 L562.4 150.0 L574.6 141.2 L586.8 134.7 L599.0 130.7 M355.0 207.6 L367.2 205.7 L379.4 199.7 L391.6 192.4 L403.8 183.1 L416.0 172.1 L428.2 162.4 L440.4 151.4 L452.6 142.5 L464.8 135.6 L477.0 131.4 L489.2 130.3 L501.4 131.9 L513.6 136.2 L525.8 141.3 L538.0 148.6 L550.2 155.9 L562.4 164.3 L574.6 172.0 L586.8 178.3 L599.0 182.3 M355.0 128.4 L367.2 127.0 L379.4 127.6 L391.6 131.1 L403.8 136.6 L416.0 144.3 L428.2 152.5 L440.4 161.5 L452.6 169.3 L464.8 175.8 L477.0 181.6 L489.2 184.0 L501.4 185.2 L513.6 184.0 L525.8 182.1 L538.0 177.8 L550.2 172.6 L562.4 168.2 L574.6 162.9 L586.8 160.1 L599.0 157.0 M355.0 181.1 L367.2 184.5 L379.4 184.9 L391.6 184.1 L403.8 181.6 L416.0 177.4 L428.2 171.6 L440.4 166.6 L452.6 163.4 L464.8 158.6 L477.0 154.9 L489.2 152.8 L501.4 151.7 L513.6 153.5 L525.8 156.6 L538.0 160.1 L550.2 164.0 L562.4 168.4 L574.6 173.6 L586.8 177.5 L599.0 182.0 M355.0 154.6 L367.2 152.8 L379.4 153.2 L391.6 154.8 L403.8 156.8 L416.0 160.5 L428.2 164.9 L440.4 169.1 L452.6 172.8 L464.8 177.4 L477.0 182.1 L489.2 185.2 L501.4 187.9 L513.6 190.2 L525.8 192.4 L538.0 194.8 L550.2 197.8 L562.4 199.9 L574.6 202.0 L586.8 205.5 L599.0 208.0 M355.0 183.7 L367.2 187.7 L379.4 190.8 L391.6 192.8 L403.8 194.8 L416.0 197.5 L428.2 199.1 L440.4 200.7 L452.6 203.2 L464.8 205.1 L477.0 206.8 L489.2 209.9 L501.4 212.0 L513.6 214.0 L525.8 216.2 L538.0 217.3 L550.2 217.7 L562.4 216.2 L574.6 214.6 L586.8 211.1 L599.0 206.0 M355.0 207.5 L367.2 209.8 L379.4 213.1 L391.6 214.7 L403.8 217.8 L416.0 219.6 L428.2 219.8 L440.4 218.8 L452.6 216.7 L464.8 213.8 L477.0 208.6 L489.2 203.1 L501.4 195.8 L513.6 188.4 L525.8 180.3 L538.0 171.2 L550.2 162.8 L562.4 153.5 L574.6 145.0 L586.8 136.9 L599.0 129.3 M355.0 205.9 L367.2 199.5 L379.4 192.9 L391.6 185.2 L403.8 177.1 L416.0 167.9 L428.2 159.7 L440.4 150.6 L452.6 142.6 L464.8 134.7 L477.0 128.1 L489.2 122.7 L501.4 117.5 L513.6 114.8 L525.8 113.3 L538.0 113.8 L550.2 114.8 L562.4 116.5 L574.6 119.6 L586.8 123.4 L599.0 129.6 M355.0 129.0 L367.2 124.4 L379.4 120.4 L391.6 116.8 L403.8 115.4 L416.0 115.6 L428.2 115.5 L440.4 117.5 L452.6 120.3 L464.8 123.1 L477.0 128.6 L489.2 134.1 L501.4 140.1 L513.6 145.9 L525.8 152.8 L538.0 159.0 L550.2 164.6 L562.4 170.2 L574.6 174.5 L586.8 178.5 L599.0 181.1 M355.0 128.7 L367.2 134.2 L379.4 139.4 L391.6 145.4 L403.8 151.6 L416.0 157.3 L428.2 163.7 L440.4 168.7 L452.6 173.3 L464.8 176.1 L477.0 180.2 L489.2 182.0 L501.4 183.6 L513.6 183.5 L525.8 183.7 L538.0 183.8 L550.2 182.7 L562.4 182.1 L574.6 181.4 L586.8 181.3 L599.0 181.2 M355.0 182.3 L367.2 184.4 L379.4 185.6 L391.6 185.7 L403.8 185.8 L416.0 185.1 L428.2 185.0 L440.4 184.4 L452.6 182.8 L464.8 182.3 L477.0 181.7 L489.2 182.3 L501.4 183.4 L513.6 184.5 L525.8 186.0 L538.0 189.0 L550.2 191.8 L562.4 194.8 L574.6 199.3 L586.8 203.6 L599.0 206.5 M355.0 184.3 L367.2 183.9 L379.4 184.5 L391.6 185.7 L403.8 187.3 L416.0 189.0 L428.2 192.3 L440.4 195.4 L452.6 199.2 L464.8 202.9 L477.0 206.5 L489.2 210.8 L501.4 214.5 L513.6 217.5 L525.8 219.3 L538.0 219.7 L550.2 218.8 L562.4 218.4 L574.6 216.0 L586.8 212.0 L599.0 206.4 M355.0 208.4 L367.2 213.2 L379.4 216.9 L391.6 219.3 L403.8 220.9 L416.0 222.2 L428.2 221.9 L440.4 220.8 L452.6 218.2 L464.8 214.0 L477.0 209.2 L489.2 202.2 L501.4 194.4 L513.6 185.8 L525.8 176.5 L538.0 167.2 L550.2 157.3 L562.4 148.6 L574.6 140.3 L586.8 134.5 L599.0 130.0 M355.0 207.0 L367.2 200.6 L379.4 192.4 L391.6 184.8 L403.8 176.1 L416.0 166.6 L428.2 157.9 L440.4 150.4 L452.6 141.9 L464.8 135.7 L477.0 131.3 L489.2 126.5 L501.4 124.0 L513.6 124.2 L525.8 125.2 L538.0 127.4 L550.2 132.0 L562.4 136.9 L574.6 142.8 L586.8 150.1 L599.0 156.0 M355.0 128.0 L367.2 125.3 L379.4 123.7 L391.6 123.4 L403.8 124.7 L416.0 127.7 L428.2 132.5 L440.4 137.2 L452.6 143.2 L464.8 149.4 L477.0 155.9 L489.2 163.4 L501.4 170.4 L513.6 176.4 L525.8 182.6 L538.0 188.4 L550.2 193.8 L562.4 197.2 L574.6 202.0 L586.8 204.5 L599.0 207.6 M355.0 154.0 L367.2 160.4 L379.4 167.1 L391.6 174.6 L403.8 179.3 L416.0 185.1 L428.2 191.4 L440.4 196.3 L452.6 201.3 L464.8 204.1 L477.0 207.8 L489.2 210.2 L501.4 213.1 L513.6 214.0 L525.8 214.4 L538.0 214.5 L550.2 214.1 L562.4 214.0 L574.6 212.1 L586.8 209.5 L599.0 206.7 M355.0 207.2 L367.2 209.4 L379.4 211.8 L391.6 214.2 L403.8 215.3 L416.0 216.1 L428.2 215.6 L440.4 214.8 L452.6 213.5 L464.8 210.6 L477.0 207.3 L489.2 204.1 L501.4 199.4 L513.6 194.0 L525.8 188.3 L538.0 181.5 L550.2 175.6 L562.4 170.3 L574.6 165.3 L586.8 159.2 L599.0 154.6 M355.0 207.4 L367.2 203.1 L379.4 199.0 L391.6 192.9 L403.8 187.8 L416.0 182.2 L428.2 176.4 L440.4 170.1 L452.6 164.2 L464.8 158.5 L477.0 154.0 L489.2 150.3 L501.4 146.3 L513.6 143.1 L525.8 141.7 L538.0 139.3 L550.2 137.6 L562.4 136.2 L574.6 134.5 L586.8 133.0 L599.0 130.5 M355.0 156.3 L367.2 152.9 L379.4 149.1 L391.6 147.0 L403.8 145.4 L416.0 143.3 L428.2 141.3 L440.4 138.9 L452.6 135.4 L464.8 132.4 L477.0 129.7 L489.2 127.2 L501.4 124.1 L513.6 121.7 L525.8 118.6 L538.0 117.3 L550.2 117.4 L562.4 118.8 L574.6 121.2 L586.8 124.3 L599.0 130.1 M355.0 130.2 L367.2 127.2 L379.4 124.1 L391.6 120.7 L403.8 118.2 L416.0 116.1 L428.2 115.1 L440.4 116.4 L452.6 119.2 L464.8 123.8 L477.0 130.1 L489.2 137.8 L501.4 146.7 L513.6 156.6 L525.8 166.7 L538.0 176.7 L550.2 186.9 L562.4 194.2 L574.6 201.5 L586.8 205.3 L599.0 205.9 M355.0 130.2 L367.2 139.1 L379.4 147.7 L391.6 157.7 L403.8 168.1 L416.0 178.5 L428.2 187.8 L440.4 196.2 L452.6 203.0 L464.8 206.8 L477.0 208.0 L489.2 206.5 L501.4 203.0 L513.6 197.9 L525.8 192.2 L538.0 183.7 L550.2 175.9 L562.4 167.7 L574.6 161.3 L586.8 157.4 L599.0 154.5 M355.0 207.7 L367.2 208.2 L379.4 205.1 L391.6 199.8 L403.8 192.3 L416.0 184.2 L428.2 176.0 L440.4 168.8 L452.6 162.2 L464.8 156.7 L477.0 154.0 L489.2 154.4 L501.4 156.7 L513.6 160.7 L525.8 167.0 L538.0 173.4 L550.2 180.9 L562.4 188.4 L574.6 195.5 L586.8 202.0 L599.0 207.7 M355.0 155.8 L367.2 154.9 L379.4 156.6 L391.6 160.7 L403.8 166.1 L416.0 173.2 L428.2 180.5 L440.4 187.6 L452.6 194.5 L464.8 201.6 L477.0 206.8 L489.2 211.2 L501.4 214.0 L513.6 215.7 L525.8 215.8 L538.0 215.8 L550.2 215.0 L562.4 212.8 L574.6 211.1 L586.8 209.1 L599.0 208.4 M355.0 207.8 L367.2 212.5 L379.4 214.9 L391.6 216.9 L403.8 217.1 L416.0 216.5 L428.2 214.5 L440.4 212.7 L452.6 210.6 L464.8 208.7 L477.0 207.0 L489.2 205.5 L501.4 205.6 L513.6 206.0 L525.8 207.3 L538.0 207.3 L550.2 208.2 L562.4 208.7 L574.6 208.4 L586.8 207.8 L599.0 206.4 M355.0 207.0 L367.2 207.2 L379.4 207.6 L391.6 208.5 L403.8 209.2 L416.0 210.0 L428.2 209.8 L440.4 210.0 L452.6 209.1 L464.8 208.2 L477.0 206.7 L489.2 204.6 L501.4 203.3 L513.6 200.0 L525.8 197.1 L538.0 193.8 L550.2 191.3 L562.4 188.5 L574.6 185.7 L586.8 183.2 L599.0 180.0 M355.0 207.3 L367.2 205.2 L379.4 202.2 L391.6 199.6 L403.8 197.0 L416.0 193.5 L428.2 189.7 L440.4 186.9 L452.6 184.3 L464.8 182.6 L477.0 181.0 L489.2 180.8 L501.4 180.5 L513.6 181.5 L525.8 182.9 L538.0 183.2 L550.2 184.2 L562.4 184.1 L574.6 184.1 L586.8 183.8 L599.0 182.9" stroke="#42a0ff" stroke-width="0.45"/></g>
<rect x="66" y="313" width="244" height="1" fill="#35312c" />
<rect x="89" y="300" width="1" height="145" fill="#35312c" />
<rect x="66" y="328" width="244" height="1" fill="#35312c" />
<rect x="113" y="300" width="1" height="145" fill="#35312c" />
<rect x="66" y="342" width="244" height="1" fill="#35312c" />
<rect x="138" y="300" width="1" height="145" fill="#35312c" />
<rect x="66" y="357" width="244" height="1" fill="#35312c" />
<rect x="162" y="300" width="1" height="145" fill="#35312c" />
<rect x="66" y="371" width="244" height="1" fill="#35312c" />
<rect x="187" y="300" width="1" height="145" fill="#35312c" />
<rect x="66" y="386" width="244" height="1" fill="#35312c" />
<rect x="211" y="300" width="1" height="145" fill="#35312c" />
<rect x="66" y="400" width="244" height="1" fill="#35312c" />
<rect x="236" y="300" width="1" height="145" fill="#35312c" />
<rect x="66" y="415" width="244" height="1" fill="#35312c" />
<rect x="260" y="300" width="1" height="145" fill="#35312c" />
<rect x="66" y="429" width="244" height="1" fill="#35312c" />
<rect x="285" y="300" width="1" height="145" fill="#35312c" />
<rect x="65.3" y="299.5" width="245" height="145.3" fill="none" stroke="#6a6256" stroke-width="1.5"/>
<text xml:space="preserve" x="64.4" y="297.0" font-family="Liberation Sans" font-size="8.7" fill="#d8d8d8" font-weight="normal" text-anchor="start" textLength="39.6" lengthAdjust="spacingAndGlyphs" >Rng 2 dBm</text>
<text xml:space="preserve" x="175.0" y="297.0" font-family="Liberation Sans" font-size="8.7" fill="#30d030" font-weight="normal" text-anchor="start" textLength="24.0" lengthAdjust="spacingAndGlyphs" >RMS:3</text>
<text xml:space="preserve" x="62.0" y="307.0" font-family="Liberation Sans" font-size="8.7" fill="#d8d8d8" font-weight="normal" text-anchor="end" >-10</text>
<text xml:space="preserve" x="62.0" y="316.5" font-family="Liberation Sans" font-size="8.7" fill="#d8d8d8" font-weight="normal" text-anchor="end" >dBm</text>
<text xml:space="preserve" x="62.0" y="350.0" font-family="Liberation Sans" font-size="8.7" fill="#d8d8d8" font-weight="normal" text-anchor="end" >LogMag</text>
<text xml:space="preserve" x="62.0" y="383.5" font-family="Liberation Sans" font-size="8.7" fill="#d8d8d8" font-weight="normal" text-anchor="end" >5</text>
<text xml:space="preserve" x="62.0" y="393.0" font-family="Liberation Sans" font-size="8.7" fill="#d8d8d8" font-weight="normal" text-anchor="end" >dB</text>
<text xml:space="preserve" x="62.0" y="403.5" font-family="Liberation Sans" font-size="8.7" fill="#d8d8d8" font-weight="normal" text-anchor="end" >/div</text>
<text xml:space="preserve" x="62.0" y="436.0" font-family="Liberation Sans" font-size="8.7" fill="#d8d8d8" font-weight="normal" text-anchor="end" >-60</text>
<text xml:space="preserve" x="62.0" y="445.5" font-family="Liberation Sans" font-size="8.7" fill="#d8d8d8" font-weight="normal" text-anchor="end" >dBm</text>
<text xml:space="preserve" x="64.4" y="455.5" font-family="Liberation Sans" font-size="8.7" fill="#d8d8d8" font-weight="normal" text-anchor="start" textLength="42.0" lengthAdjust="spacingAndGlyphs" >Center 0  Hz</text>
<text xml:space="preserve" x="64.4" y="465.0" font-family="Liberation Sans" font-size="8.7" fill="#d8d8d8" font-weight="normal" text-anchor="start" textLength="77.0" lengthAdjust="spacingAndGlyphs" >Res BW 396.681 MHz</text>
<text xml:space="preserve" x="310.0" y="456.0" font-family="Liberation Sans" font-size="8.7" fill="#d8d8d8" font-weight="normal" text-anchor="end" textLength="53.0" lengthAdjust="spacingAndGlyphs" >Span 51.2 GHz</text>
<text xml:space="preserve" x="310.0" y="465.0" font-family="Liberation Sans" font-size="8.7" fill="#d8d8d8" font-weight="normal" text-anchor="end" textLength="87.0" lengthAdjust="spacingAndGlyphs" >TimeLen 9.628296 nSec</text>
<polyline points="65.2,419.5 68.0,414.0 71.1,412.4 72.9,412.9 74.7,418.3 76.5,414.0 78.8,431.4 81.1,413.6 83.0,419.0 85.4,420.7 87.8,405.0 89.0,398.0 90.7,374.3 92.8,366.7 95.0,367.0 98.5,356.4 102.0,351.7 104.5,345.6 106.9,341.0 109.2,339.9 111.6,336.2 113.4,346.8 115.2,350.5 117.0,343.1 118.8,335.0 121.0,352.9 123.5,342.9 125.9,336.2 127.7,339.7 129.5,348.0 132.4,341.3 135.4,330.2 138.0,344.0 140.3,352.8 142.6,351.7 145.0,343.9 147.1,339.6 149.1,333.7 151.4,334.1 153.8,341.8 157.2,327.6 159.2,338.5 161.9,331.7 163.3,346.6 166.7,335.7 168.7,344.6 170.7,327.6 173.5,337.1 174.8,330.3 176.8,340.5 179.6,326.9 181.6,334.4 183.6,320.8 185.7,333.0 187.7,345.9 191.1,335.7 194.5,326.9 197.2,333.7 198.5,340.5 200.9,333.6 203.3,332.4 203.9,346.6 207.3,336.4 209.4,343.9 211.4,341.8 213.4,337.4 215.5,331.7 217.4,336.7 219.3,352.0 221.6,327.6 223.6,336.1 225.6,345.2 228.0,337.7 230.4,337.1 232.0,335.0 234.3,331.9 236.7,332.6 239.1,338.6 241.1,341.3 243.1,346.9 245.5,329.0 248.6,341.0 250.4,334.1 252.2,331.4 254.6,337.3 257.0,339.8 260.5,333.8 262.9,345.7 266.0,338.6 268.0,347.9 270.0,357.6 272.4,349.3 274.8,370.7 277.2,360.0 279.6,375.5 282.0,373.0 284.3,386.0 286.7,400.5 289.1,424.3 291.5,414.8 293.9,425.5 297.4,413.6 299.3,439.8 301.7,417.1 303.8,420.1 305.8,426.7 308.1,419.5 310.5,426.7" fill="none" stroke="#38cc1e" stroke-width="1.25" stroke-linejoin="round"/>
<text xml:space="preserve" x="464.6" y="297.0" font-family="Liberation Sans" font-size="8.2" fill="#c81452" font-weight="normal" text-anchor="start" textLength="24.0" lengthAdjust="spacingAndGlyphs" >RMS:3</text>
<text xml:space="preserve" x="324.0" y="313.0" font-family="Liberation Sans" font-size="8.3" fill="#c81452" font-weight="normal" text-anchor="start" textLength="16.4" lengthAdjust="spacing" stroke="#b01048" stroke-width="0.25">EVM</text>
<text xml:space="preserve" x="362.0" y="313.0" font-family="Liberation Sans" font-size="8.3" fill="#c81452" font-weight="normal" text-anchor="start" stroke="#b01048" stroke-width="0.25">=</text>
<text xml:space="preserve" x="369.6" y="313.0" font-family="Liberation Sans" font-size="8.3" fill="#c81452" font-weight="normal" text-anchor="start" textLength="24.4" lengthAdjust="spacing" stroke="#b01048" stroke-width="0.25">3.6343</text>
<text xml:space="preserve" x="415.4" y="313.0" font-family="Liberation Sans" font-size="8.3" fill="#c81452" font-weight="normal" text-anchor="start" textLength="19.6" lengthAdjust="spacing" stroke="#b01048" stroke-width="0.25">%rms</text>
<text xml:space="preserve" x="455.5" y="313.0" font-family="Liberation Sans" font-size="8.3" fill="#c81452" font-weight="normal" text-anchor="start" textLength="24.5" lengthAdjust="spacing" stroke="#b01048" stroke-width="0.25">9.0899</text>
<text xml:space="preserve" x="505.6" y="313.0" font-family="Liberation Sans" font-size="8.3" fill="#c81452" font-weight="normal" text-anchor="start" textLength="49.4" lengthAdjust="spacing" stroke="#b01048" stroke-width="0.25">% pk  at  sym</text>
<text xml:space="preserve" x="573.0" y="313.0" font-family="Liberation Sans" font-size="8.3" fill="#c81452" font-weight="normal" text-anchor="start" textLength="13.0" lengthAdjust="spacing" stroke="#b01048" stroke-width="0.25">152</text>
<text xml:space="preserve" x="324.0" y="322.7" font-family="Liberation Sans" font-size="8.3" fill="#c81452" font-weight="normal" text-anchor="start" textLength="28.4" lengthAdjust="spacing" stroke="#b01048" stroke-width="0.25">Mag Err</text>
<text xml:space="preserve" x="362.0" y="322.7" font-family="Liberation Sans" font-size="8.3" fill="#c81452" font-weight="normal" text-anchor="start" stroke="#b01048" stroke-width="0.25">=</text>
<text xml:space="preserve" x="369.6" y="322.7" font-family="Liberation Sans" font-size="8.3" fill="#c81452" font-weight="normal" text-anchor="start" textLength="24.4" lengthAdjust="spacing" stroke="#b01048" stroke-width="0.25">2.5740</text>
<text xml:space="preserve" x="415.4" y="322.7" font-family="Liberation Sans" font-size="8.3" fill="#c81452" font-weight="normal" text-anchor="start" textLength="19.6" lengthAdjust="spacing" stroke="#b01048" stroke-width="0.25">%rms</text>
<text xml:space="preserve" x="455.5" y="322.7" font-family="Liberation Sans" font-size="8.3" fill="#c81452" font-weight="normal" text-anchor="start" textLength="24.5" lengthAdjust="spacing" stroke="#b01048" stroke-width="0.25">8.0366</text>
<text xml:space="preserve" x="505.6" y="322.7" font-family="Liberation Sans" font-size="8.3" fill="#c81452" font-weight="normal" text-anchor="start" textLength="49.4" lengthAdjust="spacing" stroke="#b01048" stroke-width="0.25">% pk  at  sym</text>
<text xml:space="preserve" x="573.0" y="322.7" font-family="Liberation Sans" font-size="8.3" fill="#c81452" font-weight="normal" text-anchor="start" textLength="13.0" lengthAdjust="spacing" stroke="#b01048" stroke-width="0.25">194</text>
<text xml:space="preserve" x="324.0" y="332.3" font-family="Liberation Sans" font-size="8.3" fill="#c81452" font-weight="normal" text-anchor="start" textLength="35.0" lengthAdjust="spacing" stroke="#b01048" stroke-width="0.25">Phase Err</text>
<text xml:space="preserve" x="362.0" y="332.3" font-family="Liberation Sans" font-size="8.3" fill="#c81452" font-weight="normal" text-anchor="start" stroke="#b01048" stroke-width="0.25">=</text>
<text xml:space="preserve" x="369.6" y="332.3" font-family="Liberation Sans" font-size="8.3" fill="#c81452" font-weight="normal" text-anchor="start" textLength="24.4" lengthAdjust="spacing" stroke="#b01048" stroke-width="0.25">2.7794</text>
<text xml:space="preserve" x="419.0" y="332.3" font-family="Liberation Sans" font-size="8.3" fill="#c81452" font-weight="normal" text-anchor="start" textLength="14.0" lengthAdjust="spacing" stroke="#b01048" stroke-width="0.25">deg</text>
<text xml:space="preserve" x="455.5" y="332.3" font-family="Liberation Sans" font-size="8.3" fill="#c81452" font-weight="normal" text-anchor="start" textLength="24.5" lengthAdjust="spacing" stroke="#b01048" stroke-width="0.25">11.079</text>
<text xml:space="preserve" x="496.0" y="332.3" font-family="Liberation Sans" font-size="8.3" fill="#c81452" font-weight="normal" text-anchor="start" textLength="59.0" lengthAdjust="spacing" stroke="#b01048" stroke-width="0.25">deg pk  at  sym</text>
<text xml:space="preserve" x="573.0" y="332.3" font-family="Liberation Sans" font-size="8.3" fill="#c81452" font-weight="normal" text-anchor="start" textLength="13.0" lengthAdjust="spacing" stroke="#b01048" stroke-width="0.25">191</text>
<text xml:space="preserve" x="324.0" y="342.0" font-family="Liberation Sans" font-size="8.3" fill="#c81452" font-weight="normal" text-anchor="start" textLength="28.0" lengthAdjust="spacing" stroke="#b01048" stroke-width="0.25">Freq Err</text>
<text xml:space="preserve" x="362.0" y="342.0" font-family="Liberation Sans" font-size="8.3" fill="#c81452" font-weight="normal" text-anchor="start" stroke="#b01048" stroke-width="0.25">=</text>
<text xml:space="preserve" x="369.6" y="342.0" font-family="Liberation Sans" font-size="8.3" fill="#c81452" font-weight="normal" text-anchor="start" textLength="24.4" lengthAdjust="spacing" stroke="#b01048" stroke-width="0.25">73.999</text>
<text xml:space="preserve" x="419.4" y="342.0" font-family="Liberation Sans" font-size="8.3" fill="#c81452" font-weight="normal" text-anchor="start" textLength="13.0" lengthAdjust="spacing" stroke="#b01048" stroke-width="0.25">kHz</text>
<text xml:space="preserve" x="324.0" y="351.6" font-family="Liberation Sans" font-size="8.3" fill="#c81452" font-weight="normal" text-anchor="start" textLength="30.0" lengthAdjust="spacing" stroke="#b01048" stroke-width="0.25">IQ Offset</text>
<text xml:space="preserve" x="362.0" y="351.6" font-family="Liberation Sans" font-size="8.3" fill="#c81452" font-weight="normal" text-anchor="start" stroke="#b01048" stroke-width="0.25">=</text>
<text xml:space="preserve" x="369.6" y="351.6" font-family="Liberation Sans" font-size="8.3" fill="#c81452" font-weight="normal" text-anchor="start" textLength="26.8" lengthAdjust="spacing" stroke="#b01048" stroke-width="0.25">-42.049</text>
<text xml:space="preserve" x="424.0" y="351.6" font-family="Liberation Sans" font-size="8.3" fill="#c81452" font-weight="normal" text-anchor="start" textLength="9.0" lengthAdjust="spacing" stroke="#b01048" stroke-width="0.25">dB</text>
<text xml:space="preserve" x="455.5" y="351.6" font-family="Liberation Sans" font-size="8.3" fill="#c81452" font-weight="normal" text-anchor="start" textLength="41.3" lengthAdjust="spacing" stroke="#b01048" stroke-width="0.25">SNR(MER)</text>
<text xml:space="preserve" x="502.0" y="351.6" font-family="Liberation Sans" font-size="8.3" fill="#c81452" font-weight="normal" text-anchor="start" stroke="#b01048" stroke-width="0.25">=</text>
<text xml:space="preserve" x="510.0" y="351.6" font-family="Liberation Sans" font-size="8.3" fill="#c81452" font-weight="normal" text-anchor="start" textLength="23.7" lengthAdjust="spacing" stroke="#b01048" stroke-width="0.25">26.317</text>
<text xml:space="preserve" x="564.5" y="351.6" font-family="Liberation Sans" font-size="8.3" fill="#c81452" font-weight="normal" text-anchor="start" textLength="8.5" lengthAdjust="spacing" stroke="#b01048" stroke-width="0.25">dB</text>
<text xml:space="preserve" x="324.0" y="361.3" font-family="Liberation Sans" font-size="8.3" fill="#c81452" font-weight="normal" text-anchor="start" textLength="32.0" lengthAdjust="spacing" stroke="#b01048" stroke-width="0.25">Quad Err</text>
<text xml:space="preserve" x="362.0" y="361.3" font-family="Liberation Sans" font-size="8.3" fill="#c81452" font-weight="normal" text-anchor="start" stroke="#b01048" stroke-width="0.25">=</text>
<text xml:space="preserve" x="369.6" y="361.3" font-family="Liberation Sans" font-size="8.3" fill="#c81452" font-weight="normal" text-anchor="start" textLength="24.4" lengthAdjust="spacing" stroke="#b01048" stroke-width="0.25">233.25</text>
<text xml:space="preserve" x="415.0" y="361.3" font-family="Liberation Sans" font-size="8.3" fill="#c81452" font-weight="normal" text-anchor="start" textLength="20.6" lengthAdjust="spacing" stroke="#b01048" stroke-width="0.25">mdeg</text>
<text xml:space="preserve" x="455.5" y="361.3" font-family="Liberation Sans" font-size="8.3" fill="#c81452" font-weight="normal" text-anchor="start" textLength="35.9" lengthAdjust="spacing" stroke="#b01048" stroke-width="0.25">Gain  Imb</text>
<text xml:space="preserve" x="502.0" y="361.3" font-family="Liberation Sans" font-size="8.3" fill="#c81452" font-weight="normal" text-anchor="start" stroke="#b01048" stroke-width="0.25">=</text>
<text xml:space="preserve" x="510.0" y="361.3" font-family="Liberation Sans" font-size="8.3" fill="#c81452" font-weight="normal" text-anchor="start" textLength="19.7" lengthAdjust="spacing" stroke="#b01048" stroke-width="0.25">0.023</text>
<text xml:space="preserve" x="564.5" y="361.3" font-family="Liberation Sans" font-size="8.3" fill="#c81452" font-weight="normal" text-anchor="start" textLength="8.5" lengthAdjust="spacing" stroke="#b01048" stroke-width="0.25">dB</text>
<rect x="320" y="364" width="284" height="4" fill="#8c0c3c" />
<text xml:space="preserve" x="347.0" y="380.0" font-family="Liberation Sans" font-size="8.3" fill="#c81452" font-weight="normal" text-anchor="end" textLength="4.2" lengthAdjust="spacing" stroke="#b01048" stroke-width="0.25">0</text>
<text xml:space="preserve" x="352.4" y="380.0" font-family="Liberation Sans" font-size="8.3" fill="#c81452" font-weight="normal" text-anchor="start" textLength="41.2" lengthAdjust="spacing" stroke="#b01048" stroke-width="0.25">4FDA29A7</text>
<text xml:space="preserve" x="398.9" y="380.0" font-family="Liberation Sans" font-size="8.3" fill="#c81452" font-weight="normal" text-anchor="start" textLength="41.2" lengthAdjust="spacing" stroke="#b01048" stroke-width="0.25">C116F421</text>
<text xml:space="preserve" x="445.5" y="380.0" font-family="Liberation Sans" font-size="8.3" fill="#c81452" font-weight="normal" text-anchor="start" textLength="41.2" lengthAdjust="spacing" stroke="#b01048" stroke-width="0.25">1C2221AF</text>
<text xml:space="preserve" x="492.0" y="380.0" font-family="Liberation Sans" font-size="8.3" fill="#c81452" font-weight="normal" text-anchor="start" textLength="41.2" lengthAdjust="spacing" stroke="#b01048" stroke-width="0.25">92CEA550</text>
<text xml:space="preserve" x="538.6" y="380.0" font-family="Liberation Sans" font-size="8.3" fill="#c81452" font-weight="normal" text-anchor="start" textLength="41.2" lengthAdjust="spacing" stroke="#b01048" stroke-width="0.25">8B765A83</text>
<text xml:space="preserve" x="347.0" y="389.7" font-family="Liberation Sans" font-size="8.3" fill="#c81452" font-weight="normal" text-anchor="end" textLength="9.3" lengthAdjust="spacing" stroke="#b01048" stroke-width="0.25">40</text>
<text xml:space="preserve" x="352.4" y="389.7" font-family="Liberation Sans" font-size="8.3" fill="#c81452" font-weight="normal" text-anchor="start" textLength="41.2" lengthAdjust="spacing" stroke="#b01048" stroke-width="0.25">C95B353D</text>
<text xml:space="preserve" x="398.9" y="389.7" font-family="Liberation Sans" font-size="8.3" fill="#c81452" font-weight="normal" text-anchor="start" textLength="41.2" lengthAdjust="spacing" stroke="#b01048" stroke-width="0.25">F2CB032C</text>
<text xml:space="preserve" x="445.5" y="389.7" font-family="Liberation Sans" font-size="8.3" fill="#c81452" font-weight="normal" text-anchor="start" textLength="41.2" lengthAdjust="spacing" stroke="#b01048" stroke-width="0.25">27594830</text>
<text xml:space="preserve" x="492.0" y="389.7" font-family="Liberation Sans" font-size="8.3" fill="#c81452" font-weight="normal" text-anchor="start" textLength="41.2" lengthAdjust="spacing" stroke="#b01048" stroke-width="0.25">4E77F0A4</text>
<text xml:space="preserve" x="538.6" y="389.7" font-family="Liberation Sans" font-size="8.3" fill="#c81452" font-weight="normal" text-anchor="start" textLength="41.2" lengthAdjust="spacing" stroke="#b01048" stroke-width="0.25">BDB41C78</text>
<text xml:space="preserve" x="347.0" y="399.3" font-family="Liberation Sans" font-size="8.3" fill="#c81452" font-weight="normal" text-anchor="end" textLength="9.3" lengthAdjust="spacing" stroke="#b01048" stroke-width="0.25">80</text>
<text xml:space="preserve" x="352.4" y="399.3" font-family="Liberation Sans" font-size="8.3" fill="#c81452" font-weight="normal" text-anchor="start" textLength="41.2" lengthAdjust="spacing" stroke="#b01048" stroke-width="0.25">67C9A56F</text>
<text xml:space="preserve" x="398.9" y="399.3" font-family="Liberation Sans" font-size="8.3" fill="#c81452" font-weight="normal" text-anchor="start" textLength="41.2" lengthAdjust="spacing" stroke="#b01048" stroke-width="0.25">3B68E9A4</text>
<text xml:space="preserve" x="445.5" y="399.3" font-family="Liberation Sans" font-size="8.3" fill="#c81452" font-weight="normal" text-anchor="start" textLength="41.2" lengthAdjust="spacing" stroke="#b01048" stroke-width="0.25">0B79A755</text>
<text xml:space="preserve" x="492.0" y="399.3" font-family="Liberation Sans" font-size="8.3" fill="#c81452" font-weight="normal" text-anchor="start" textLength="41.2" lengthAdjust="spacing" stroke="#b01048" stroke-width="0.25">85E5C16C</text>
<text xml:space="preserve" x="538.6" y="399.3" font-family="Liberation Sans" font-size="8.3" fill="#c81452" font-weight="normal" text-anchor="start" textLength="41.2" lengthAdjust="spacing" stroke="#b01048" stroke-width="0.25">C8D9DAAF</text>
<text xml:space="preserve" x="347.0" y="409.0" font-family="Liberation Sans" font-size="8.3" fill="#c81452" font-weight="normal" text-anchor="end" textLength="14.5" lengthAdjust="spacing" stroke="#b01048" stroke-width="0.25">120</text>
<text xml:space="preserve" x="352.4" y="409.0" font-family="Liberation Sans" font-size="8.3" fill="#c81452" font-weight="normal" text-anchor="start" textLength="41.2" lengthAdjust="spacing" stroke="#b01048" stroke-width="0.25">8CC73B17</text>
<text xml:space="preserve" x="398.9" y="409.0" font-family="Liberation Sans" font-size="8.3" fill="#c81452" font-weight="normal" text-anchor="start" textLength="41.2" lengthAdjust="spacing" stroke="#b01048" stroke-width="0.25">3753957F</text>
<text xml:space="preserve" x="445.5" y="409.0" font-family="Liberation Sans" font-size="8.3" fill="#c81452" font-weight="normal" text-anchor="start" textLength="41.2" lengthAdjust="spacing" stroke="#b01048" stroke-width="0.25">6BDE398B</text>
<text xml:space="preserve" x="492.0" y="409.0" font-family="Liberation Sans" font-size="8.3" fill="#c81452" font-weight="normal" text-anchor="start" textLength="41.2" lengthAdjust="spacing" stroke="#b01048" stroke-width="0.25">023180AD</text>
<text xml:space="preserve" x="538.6" y="409.0" font-family="Liberation Sans" font-size="8.3" fill="#c81452" font-weight="normal" text-anchor="start" textLength="41.2" lengthAdjust="spacing" stroke="#b01048" stroke-width="0.25">EEC50DBD</text>
<text xml:space="preserve" x="347.0" y="418.7" font-family="Liberation Sans" font-size="8.3" fill="#c81452" font-weight="normal" text-anchor="end" textLength="14.5" lengthAdjust="spacing" stroke="#b01048" stroke-width="0.25">160</text>
<text xml:space="preserve" x="352.4" y="418.7" font-family="Liberation Sans" font-size="8.3" fill="#c81452" font-weight="normal" text-anchor="start" textLength="41.2" lengthAdjust="spacing" stroke="#b01048" stroke-width="0.25">AB9E7164</text>
<text xml:space="preserve" x="398.9" y="418.7" font-family="Liberation Sans" font-size="8.3" fill="#c81452" font-weight="normal" text-anchor="start" textLength="41.2" lengthAdjust="spacing" stroke="#b01048" stroke-width="0.25">3F8F6605</text>
<text xml:space="preserve" x="445.5" y="418.7" font-family="Liberation Sans" font-size="8.3" fill="#c81452" font-weight="normal" text-anchor="start" textLength="41.2" lengthAdjust="spacing" stroke="#b01048" stroke-width="0.25">47F97D50</text>
<text xml:space="preserve" x="492.0" y="418.7" font-family="Liberation Sans" font-size="8.3" fill="#c81452" font-weight="normal" text-anchor="start" textLength="41.2" lengthAdjust="spacing" stroke="#b01048" stroke-width="0.25">BD08AB26</text>
<text xml:space="preserve" x="538.6" y="418.7" font-family="Liberation Sans" font-size="8.3" fill="#c81452" font-weight="normal" text-anchor="start" textLength="41.2" lengthAdjust="spacing" stroke="#b01048" stroke-width="0.25">E69C2F88</text>
<text xml:space="preserve" x="347.0" y="428.4" font-family="Liberation Sans" font-size="8.3" fill="#c81452" font-weight="normal" text-anchor="end" textLength="14.5" lengthAdjust="spacing" stroke="#b01048" stroke-width="0.25">200</text>
<text xml:space="preserve" x="352.4" y="428.4" font-family="Liberation Sans" font-size="8.3" fill="#c81452" font-weight="normal" text-anchor="start" textLength="41.2" lengthAdjust="spacing" stroke="#b01048" stroke-width="0.25">270BEE5B</text>
<text xml:space="preserve" x="398.9" y="428.4" font-family="Liberation Sans" font-size="8.3" fill="#c81452" font-weight="normal" text-anchor="start" textLength="41.2" lengthAdjust="spacing" stroke="#b01048" stroke-width="0.25">5B7E2C1E</text>
<text xml:space="preserve" x="445.5" y="428.4" font-family="Liberation Sans" font-size="8.3" fill="#c81452" font-weight="normal" text-anchor="start" textLength="41.2" lengthAdjust="spacing" stroke="#b01048" stroke-width="0.25">2E0B3D5A</text>
<text xml:space="preserve" x="492.0" y="428.4" font-family="Liberation Sans" font-size="8.3" fill="#c81452" font-weight="normal" text-anchor="start" textLength="41.2" lengthAdjust="spacing" stroke="#b01048" stroke-width="0.25">8E8E8DD3</text>
<text xml:space="preserve" x="538.6" y="428.4" font-family="Liberation Sans" font-size="8.3" fill="#c81452" font-weight="normal" text-anchor="start" textLength="41.2" lengthAdjust="spacing" stroke="#b01048" stroke-width="0.25">1A91F143</text>
<text xml:space="preserve" x="347.0" y="438.0" font-family="Liberation Sans" font-size="8.3" fill="#c81452" font-weight="normal" text-anchor="end" textLength="14.5" lengthAdjust="spacing" stroke="#b01048" stroke-width="0.25">240</text>
<text xml:space="preserve" x="352.4" y="438.0" font-family="Liberation Sans" font-size="8.3" fill="#c81452" font-weight="normal" text-anchor="start" textLength="41.2" lengthAdjust="spacing" stroke="#b01048" stroke-width="0.25">B03B6853</text>
<text xml:space="preserve" x="398.9" y="438.0" font-family="Liberation Sans" font-size="8.3" fill="#c81452" font-weight="normal" text-anchor="start" textLength="41.2" lengthAdjust="spacing" stroke="#b01048" stroke-width="0.25">2F2340D4</text>
<text xml:space="preserve" x="35.0" y="486.0" font-family="Liberation Sans" font-size="7.2" fill="#444" font-weight="normal" text-anchor="start" textLength="64.6" lengthAdjust="spacingAndGlyphs" stroke="#444" stroke-width="0.2">Average in Progress</text>
<rect x="507" y="477" width="1" height="11" fill="#555" />
<rect x="554" y="477" width="1" height="11" fill="#555" />
<text xml:space="preserve" x="518.0" y="486.0" font-family="Liberation Sans" font-size="7.2" fill="#444" font-weight="normal" text-anchor="start" textLength="25.6" lengthAdjust="spacingAndGlyphs" stroke="#444" stroke-width="0.2">INT REF</text>
<text xml:space="preserve" x="564.4" y="486.0" font-family="Liberation Sans" font-size="7.2" fill="#444" font-weight="normal" text-anchor="start" textLength="34.0" lengthAdjust="spacingAndGlyphs" stroke="#444" stroke-width="0.2">CAL: None</text>
<text xml:space="preserve" x="21.6" y="536.0" font-family="Liberation Sans" font-size="31.5" fill="#4a4a4a" font-weight="normal" text-anchor="start" textLength="411.0" lengthAdjust="spacingAndGlyphs" stroke="#fff" stroke-width="0.9">Figure 1. 16 QAM @ 32 GBaud.</text>
</svg></body></html>
